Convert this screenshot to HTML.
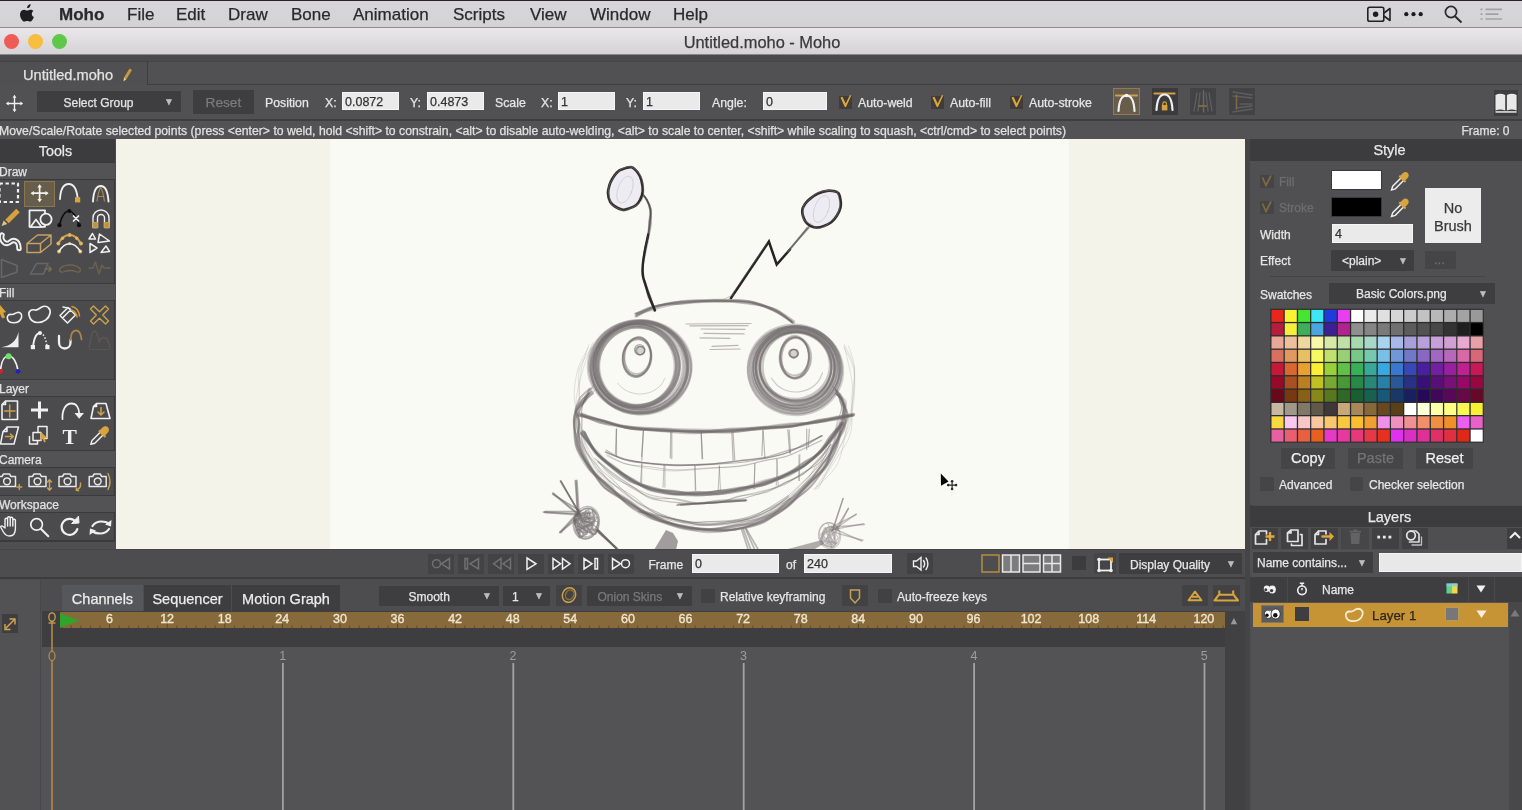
<!DOCTYPE html>
<html lang="en">
<head>
<meta charset="utf-8">
<title>Untitled.moho - Moho</title>
<style>
*{box-sizing:border-box;margin:0;padding:0}
html,body{width:1522px;height:810px;overflow:hidden}
body{position:relative;background:#4c4c4e;font-family:"Liberation Sans",sans-serif;color:#e6e6e6;font-size:12px;-webkit-font-smoothing:antialiased;-webkit-text-stroke:.25px}
.a{position:absolute}
.t{position:absolute;white-space:nowrap;line-height:1}
#menubar{left:0;top:0;width:1522px;height:28px;background:linear-gradient(#d7d5d8,#d3d3d5);border-top:1px solid #24242c;border-bottom:1px solid #8f8d90}
#menubar .t{top:5px;font-size:17px;color:#2a2a2a}
#titlebar{left:0;top:28px;width:1522px;height:27px;background:linear-gradient(#eae7eb,#d6d3d6);border-bottom:1px solid #8a8689}
.tl{position:absolute;width:15px;height:15px;border-radius:50%;top:6px}
#chrome{left:0;top:55px;width:1522px;height:84px;background:#505052}
.inp{position:absolute;background:#eaeaea;border:1px solid #f6f6f6;color:#333;font-size:12.500px;line-height:17px;padding-left:2px;padding-top:1px;height:18px}
.dd{position:absolute;background:#3e3e40;color:#e6e6e6}
.btn{position:absolute;background:#414143}
.cb{position:absolute;width:13px;height:13px;background:#403c38}
.hd{position:absolute;background:#3c3c3e;text-align:center;color:#e8e8e8;font-size:15px}
.sec{position:absolute;left:0;width:115px;height:14px;background:#535355;color:#e2e2e2;font-size:12px;line-height:18.500px;text-indent:-1px;overflow:hidden;border-top:1px solid #3a3a3c;border-bottom:1px solid #3a3a3c}
</style>
</head>
<body>
<svg width="0" height="0" style="position:absolute"><defs><filter id="soft" x="0" y="0" width="1" height="1" color-interpolation-filters="sRGB"><feGaussianBlur stdDeviation="0.6" edgeMode="duplicate"/></filter></defs></svg>
<div id="app" style="position:absolute;left:0;top:0;width:1522px;height:810px;filter:url(#soft)">
<div id="menubar" class="a">
  <svg class="a" style="left:19px;top:3px" width="17" height="20" viewBox="0 0 17 20"><path d="M11.6 0.2c.1 1-.3 2-.9 2.700-.7.8-1.700 1.300-2.600 1.200-.1-1 .4-2 .9-2.600.7-.8 1.800-1.300 2.600-1.300zM14.500 7c-1.100.7-1.700 1.600-1.700 2.900 0 1.500.9 2.600 2.100 3.100-.3.900-.7 1.700-1.200 2.500-.7 1-1.500 2.100-2.700 2.100-1.100 0-1.400-.7-2.800-.7s-1.800.7-2.800.7c-1.200 0-2-1.100-2.800-2.200C1.100 13.200.4 10 1.600 7.900c.8-1.400 2.100-2.200 3.500-2.200 1.200 0 2.100.8 3 .8.900 0 1.700-.8 3.200-.8 1.200 0 2.400.5 3.200 1.300z" fill="#1e1e1e"/></svg>
  <span class="t" style="left:59px;font-weight:bold">Moho</span>
  <span class="t" style="left:127px">File</span>
  <span class="t" style="left:176px">Edit</span>
  <span class="t" style="left:228px">Draw</span>
  <span class="t" style="left:291px">Bone</span>
  <span class="t" style="left:353px">Animation</span>
  <span class="t" style="left:453px">Scripts</span>
  <span class="t" style="left:530px">View</span>
  <span class="t" style="left:590px">Window</span>
  <span class="t" style="left:673px">Help</span>
  <svg class="a" style="left:1360px;top:0" width="160" height="27" viewBox="1360 1 160 27"><g fill="none" stroke="#222" stroke-width="1.600"><rect x="1367.800" y="7.300" width="16" height="14" rx="1.800"/><path d="M1384 13l6-4.500v12l-6-4.500" stroke-linejoin="round"/><circle cx="1451" cy="12" r="5.600" stroke="#2a2a2a" stroke-width="1.700"/><path d="M1455 16.200l6.500 6.300" stroke="#2a2a2a" stroke-width="1.900"/></g><g fill="#1c1c1c"><circle cx="1375.600" cy="14.200" r="2.700"/><circle cx="1406.300" cy="14.200" r="2.100"/><circle cx="1413.500" cy="14.200" r="2.100"/><circle cx="1420.700" cy="14.200" r="2.100"/></g><g stroke="#a2a2a2" stroke-width="1.700"><path d="M1480.500 9.300h2M1485.500 9.300h16.500M1480.500 14.200h2M1485.500 14.200h13M1480.500 19h2M1485.500 19h16.500"/></g></svg>
</div>
<div id="titlebar" class="a">
  <div class="tl" style="left:3.500px;background:#ee5c56"></div>
  <div class="tl" style="left:27.500px;background:#f6bd3e"></div>
  <div class="tl" style="left:51.500px;background:#5fc84a"></div>
  <span class="t" style="left:0;width:1522px;text-align:center;top:6px;padding-left:2px;font-size:16.400px;color:#3a3a3a">Untitled.moho - Moho</span>
</div>
<div id="chrome" class="a">
  <div class="a" style="left:0;top:0;width:1522px;height:6px;background:#4a4a4c"></div>
  <div class="a" style="left:0;top:6px;width:148px;height:24px;background:#505052;border-right:1px solid #3e3e40;border-top:1px solid #424244"></div>
  <div class="a" style="left:148px;top:6px;width:1374px;height:24px;background:#515153;border-bottom:1px solid #3e3e40;border-top:1px solid #464648"></div>
  <span class="t" style="left:23px;top:13px;font-size:14.600px;color:#e2e2e2">Untitled.moho</span>
  <svg class="a" style="left:120px;top:12px" width="14" height="16" viewBox="0 0 14 16"><path d="M9.500 1.500l2.500 1.500-5.500 9-2.500-1.500z" fill="#c99a3c"/><path d="M4 10.500l2.500 1.500-3 2.500z" fill="#e6d2a0"/></svg>
  <div class="a" style="left:0;top:30px;width:1522px;height:36px;background:#515153;border-bottom:2px solid #3e3e40"></div>
  <svg class="a" style="left:4.500px;top:39px" width="19" height="19" viewBox="0 0 22 22"><g stroke="#f0f0f0" stroke-width="1.600" fill="#f0f0f0"><path d="M11 3v16M3 11h16" fill="none"/><path d="M11 1l2.200 3.200h-4.400zM11 21l2.200-3.200h-4.400zM1 11l3.200-2.200v4.400zM21 11l-3.200-2.200v4.400z" stroke="none"/></g></svg>
  <div class="dd" style="left:37px;top:36px;width:144px;height:21px"></div>
  <span class="t" style="left:63.500px;top:42px;font-size:12px;color:#e4e4e4">Select Group</span>
  <span class="t" style="left:164px;top:42px;font-size:10px;color:#bdbdbd">▼</span>
  <div class="btn" style="left:193px;top:35px;width:61px;height:24px;background:#3e3e40"></div>
  <span class="t" style="left:205.500px;top:41px;font-size:13.700px;color:#7b7b7d">Reset</span>
  <span class="t" style="left:265px;top:41.500px;font-size:12.300px">Position</span>
  <span class="t" style="left:325px;top:41.500px;font-size:12.300px">X:</span>
  <div class="inp" style="left:342px;top:37px;width:57px">0.0872</div>
  <span class="t" style="left:410px;top:41.500px;font-size:12.300px">Y:</span>
  <div class="inp" style="left:427px;top:37px;width:57px">0.4873</div>
  <span class="t" style="left:495px;top:41.500px;font-size:12.300px">Scale</span>
  <span class="t" style="left:541px;top:41.500px;font-size:12.300px">X:</span>
  <div class="inp" style="left:558px;top:37px;width:57px">1</div>
  <span class="t" style="left:626px;top:41.500px;font-size:12.300px">Y:</span>
  <div class="inp" style="left:643px;top:37px;width:57px">1</div>
  <span class="t" style="left:712px;top:41.500px;font-size:12.300px">Angle:</span>
  <div class="inp" style="left:763px;top:37px;width:64px">0</div>
  <div class="cb" style="left:839px;top:41px"></div>
  <span class="t" style="left:858px;top:41.500px;font-size:12.300px">Auto-weld</span>
  <div class="cb" style="left:931px;top:41px"></div>
  <span class="t" style="left:950px;top:41.500px;font-size:12.300px">Auto-fill</span>
  <div class="cb" style="left:1010px;top:41px"></div>
  <span class="t" style="left:1029px;top:41.500px;font-size:12.300px">Auto-stroke</span>
  <svg class="a" style="left:837px;top:38px" width="190" height="18" viewBox="0 0 190 18"><g id="ck"><path d="M3.500 4.500l2-.8 3.200 6.800 4.300-8.500 1.300.6-5.300 11.400h-1.200z" fill="#dca640"/></g><use href="#ck" x="92"/><use href="#ck" x="171"/></svg>
  <div class="btn" style="left:1113px;top:33px;width:27px;height:27px;background:#685d4b;border:1px solid #8f7c56"></div>
  <div class="btn" style="left:1152px;top:33px;width:26px;height:27px;background:#3b3b3d"></div>
  <div class="btn" style="left:1190px;top:33px;width:26px;height:27px;background:#434345"></div>
  <div class="btn" style="left:1229px;top:33px;width:26px;height:27px;background:#434345"></div>
  <div class="btn" style="left:1494px;top:34.500px;width:24px;height:26px;background:#3e3e40"></div>
  <svg class="a" style="left:1110px;top:30px" width="412" height="34" viewBox="1110 85 412 34">
    <g fill="none" stroke-linecap="round">
      <path d="M1116 95.500h21" stroke="#c9a050" stroke-width="2.200"/>
      <path d="M1118.500 111c0.500-9 3-15.500 8-15.500s7.500 6.500 8 15.500" stroke="#f0f0f0" stroke-width="2.200"/>
      <circle cx="1126.500" cy="95.500" r="1.800" fill="#f4f4f4" stroke="none"/>
      <path d="M1154.500 93.500h20" stroke="#d2a043" stroke-width="2.200"/>
      <path d="M1156.500 110c0.500-9 3-15.500 8-15.500s7.500 6.500 8 15.500" stroke="#eeeeee" stroke-width="2.200"/>
      <rect x="1161.800" y="105" width="5.600" height="5.400" fill="#d9a23d" stroke="none"/>
      <path d="M1162.800 105v-1.300a1.800 1.800 0 0 1 3.600 0v1.300" stroke="#d9a23d" stroke-width="1.200"/>
      <g stroke="#5e5e60" stroke-width="1.400"><path d="M1197 93l-3 18M1200 93l-2 18M1209 93l3 18M1206 93l2 18"/><path d="M1203.500 91v21" stroke="#6a6a6a"/><path d="M1199 106h7" stroke="#7a6a44" stroke-width="2"/></g>
      <g stroke="#5e5e60" stroke-width="1.400"><path d="M1233 92l19 3M1233 96l19 2M1240 104h12M1233 112l19-3M1236 108l16-2"/><path d="M1236.500 95v14" stroke="#7a6a44" stroke-width="1.600"/></g>
    </g>
    <g fill="#e9e9e9"><path d="M1495.500 95c3-1.800 6.500-1.800 9.700 0v15.500c-3.200-1.500-6.700-1.500-9.700 0z"/><path d="M1516.600 95c-3-1.800-6.500-1.800-9.700 0v15.500c3.200-1.500 6.700-1.500 9.700 0z"/><rect x="1495.500" y="111.200" width="21.100" height="1.500"/></g>
  </svg>
  <div class="a" style="left:0;top:66px;width:1522px;height:18px;background:#535355"></div>
  <span class="t" style="left:-1px;top:69.500px;font-size:12.220px;color:#e0e0e0">Move/Scale/Rotate selected points (press &lt;enter&gt; to weld, hold &lt;shift&gt; to constrain, &lt;alt&gt; to disable auto-welding, &lt;alt&gt; to scale to center, &lt;shift&gt; while scaling to squash, &lt;ctrl/cmd&gt; to select points)</span>
  <span class="t" style="left:1461.500px;top:69.500px;font-size:12px;color:#e0e0e0">Frame: 0</span>
</div>
<div id="tools" class="a" style="left:0;top:139px;width:115px;height:410px;background:#4b4b4d;border-right:1px solid #39393b">
  <div class="hd" style="left:0;top:0;width:115px;height:23px;line-height:24px;font-size:14.300px;padding-right:4px">Tools</div>
  <div class="sec" style="top:23px;height:18px">Draw</div>
  <div class="sec" style="top:144px;height:18px">Fill</div>
  <div class="sec" style="top:240px;height:18px">Layer</div>
  <div class="sec" style="top:311px;height:18px">Camera</div>
  <div class="sec" style="top:356px;height:18px">Workspace</div>
  <div class="a" style="left:0;top:401px;width:115px;height:2px;background:#3a3a3c"></div>
  <div class="a" style="left:0;top:403px;width:115px;height:7px;background:#4f4f51"></div>
  <div class="a" style="left:24px;top:42px;width:31px;height:26px;background:#675d4b;border:1px solid #8a7751"></div>
  <svg class="a" style="left:0;top:0" width="115" height="410" viewBox="0 139 115 410">
  <g fill="none" stroke="#f0f0f0" stroke-width="2" stroke-linecap="round" stroke-linejoin="round">
    <!-- Draw row 1 -->
    <rect x="-0.500" y="183.500" width="18.500" height="18.500" stroke-width="2.200" stroke-dasharray="3.400 2.600" stroke-linecap="butt"/>
    <path d="M39.600 186v14.500M32.300 193.200h14.600" stroke-width="1.700"/>
    <path d="M39.600 184.200l2.300 3.200h-4.600zM39.600 202.200l2.300-3.200h-4.600zM30.600 193.200l3.200-2.300v4.600zM48.600 193.200l-3.200-2.300v4.600z" fill="#f0f0f0" stroke="none"/>
    <path d="M60 199c.5-9 3.500-15 8.700-15s8.200 6 9 15" stroke-width="1.800"/>
    <rect x="75" y="197.200" width="5.200" height="5.200" fill="#d8a440" stroke="none"/>
    <path d="M93 201.500c.5-9.500 3-15.500 7.700-15.500s7.200 6 7.800 15.500" stroke-width="1.900"/>
    <path d="M97 201c1-7 2-11 3.700-13.500 1.700 2.500 2.700 6.500 3.700 13.500M98.500 196.500h4.500" stroke="#a48c52" stroke-width="1.200"/>
    <!-- Draw row 2 -->
    <path d="M7 221.500l11-11" stroke="#d8a33c" stroke-width="5" stroke-linecap="butt"/>
    <path d="M1.500 226l2.200-5.600 3.600 3.600z" fill="#dcc88c" stroke="none"/>
    <rect x="29.500" y="210.300" width="15.500" height="16.500" stroke-width="1.800"/>
    <circle cx="46" cy="219.300" r="5.600" fill="#4b4b4d" stroke-width="1.800"/>
    <path d="M30.500 227l5.500-7.500 5.500 7.500z" fill="#4b4b4d" stroke-width="1.700"/>
    <path d="M59.500 225c2-8 5-14 9.500-14s7.500 6 10 14" stroke="#0c0c0c" stroke-width="1.500"/>
    <circle cx="59.500" cy="225.200" r="2.100" fill="#0c0c0c" stroke="none"/><circle cx="79" cy="225.200" r="2.100" fill="#0c0c0c" stroke="none"/><circle cx="69.300" cy="211" r="2" fill="#0c0c0c" stroke="none"/>
    <path d="M73.500 216l5 5M78.500 216l-5 5" stroke-width="1.700"/>
    <path d="M93 227.500v-9.500a8 8 0 0 1 16 0v9.500h-4.500v-9.500a3.500 3.500 0 0 0 -7 0v9.500z" stroke-width="1.400"/>
    <path d="M93 222.500h4.500v5h-4.500zM104.500 222.500h4.500v5h-4.500z" fill="#b8924a" stroke="#c9a045" stroke-width="1.200"/>
    <!-- Draw row 3 -->
    <path d="M2 235c-1.500 4 1.500 8.500 5 8.500 3 0 3.500-3 6.500-3 3.500 0 5.500 3.500 5.500 8" stroke-width="5.500"/>
    <path d="M2 235c-1.500 4 1.500 8.500 5 8.500 3 0 3.500-3 6.500-3 3.500 0 5.500 3.500 5.500 8" stroke="#4b4b4d" stroke-width="1.600"/>
    <path d="M27 243.500l10.500-8.500h13.500l-10.500 8.500zM27 243.500v9h13.500v-9M40.500 252.500l10.500-8.500v-9" stroke="#c5a162" stroke-width="1.500"/>
    <path d="M58.300 243.500c3-5.500 7-8.500 11.300-8.500s8.300 3 11.300 8.500" stroke="#d2a344" stroke-width="2"/>
    <g fill="#e0b65c" stroke="none"><circle cx="58.300" cy="243.500" r="1.900"/><circle cx="62.500" cy="238.300" r="1.700"/><circle cx="69.600" cy="235" r="1.900"/><circle cx="76.700" cy="238.300" r="1.700"/><circle cx="81" cy="243.500" r="1.900"/><circle cx="59" cy="251.500" r="1.900"/><circle cx="80.300" cy="251.500" r="1.900"/><circle cx="69.600" cy="243.600" r="1.700"/></g>
    <path d="M59 251.500c3-5 6.500-7.800 10.600-7.800s7.700 2.800 10.700 7.800" stroke-width="1.600"/>
    <path d="M89 239l3.500-5.500 3 5.500zM98 242.500l1.500-8.500 10 7zM90 243.500l7 4.500-7 4.500zM101 252.500l5-6.500 3.500 5.500z" stroke-width="1.500"/>
    <!-- Draw row 4 (disabled) -->
    <g stroke="#68686a" stroke-width="1.500">
      <path d="M1.500 259.500l15.500 6v6.500l-15.500 5.500z"/>
      <path d="M36.500 263.500h11.500l-4.500 10.500h-13z"/>
      <path d="M45 269h6M49 266.800l2.500 2.200-2.500 2.200" stroke="#7a6c4c"/>
      <path d="M59.500 270c0-2.500 4.500-5 10.500-5s10.500 2.500 10.500 5-3 2.500-5 1.500-3.500-1-5.500-1-3.500 0-5.500 1-5 1-5-1.500z" stroke="#72664c" stroke-width="1.300"/>
      <path d="M89 268h4l2.500-6 3.500 12 3-9 2 3h6" stroke="#6c6450" stroke-width="1.300"/>
    </g>
    <!-- Fill row 1 -->
    <path d="M0 305.500l5.500 6.500-2.800.3 1.800 5-2 .8-2.500-5z" fill="#dca43a" stroke="#dca43a" stroke-width=".800"/>
    <path d="M7.500 319c-1-3 1-5 4-4.500 2.500.3 3.500-1.500 6-2 3-.6 5 2 4 5-.9 3-4 5.300-8 5.300-3 0-5.300-1.300-6-3.800z" stroke-width="1.600"/>
    <path d="M29 315c-1-3.500 2-6 6-5 3 .7 4.500-2.500 8-3.500 4.500-1.200 8 2.300 7 7-1 5-6 9-12 9-4.500 0-8-2.500-9-7.500z" stroke-width="1.700"/>
    <path d="M60 315.500l8-8 7.500 7.500-8 8zM62.500 318l8-8M63 307l7 1.500" stroke-width="1.500"/>
    <path d="M72 306.500c4 1 7 4 7.500 9.500M71.500 310c3 1 5 3 5.500 7" stroke="#c9963a" stroke-width="1.600"/>
    <path d="M93.500 306l6 5.800 6-5.800 3 3-5.800 6 5.800 6-3 3-6-5.800-6 5.800-3-3 5.800-6-5.800-6z" stroke="#c9a050" stroke-width="1.400"/>
    <!-- Fill row 2 -->
    <path d="M1.200 347.300h17.300v-15.500c-2 9-7 14-17.300 15.500z" fill="#efefef" stroke="none"/>
    <path d="M33 346.500c1-8 3.500-13.500 7-13.500" stroke-width="1.800"/>
    <path d="M40 333c3.500 0 6 5.500 7 13.500" stroke-width="1.500" stroke-dasharray="1.600 1.800" stroke-linecap="butt"/>
    <g fill="#f0f0f0" stroke="none"><rect x="30.800" y="345" width="4.200" height="4.200"/><rect x="45.300" y="345" width="4.200" height="4.200"/><circle cx="40" cy="333" r="2"/></g>
    <path d="M59 336v6.500c0 3.500 2.500 6 5.800 6s5.700-2.500 5.700-6v-2.500" stroke-width="2.300"/>
    <path d="M70.500 340c.3-6 2.500-9.500 5.500-9.500s5 3.500 5.500 9" stroke="#a88446" stroke-width="1.800"/>
    <path d="M89 348c1.500-10 3.500-17 5.500-17s3.500 5 5 11c1-3 2.500-4.500 4.500-4.500 3 0 5 4 6 10.500" stroke="#5d5950" stroke-width="1.300"/>
    <path d="M89.500 349.500h21" stroke="#5d5950" stroke-width="1.200" stroke-dasharray="1.500 1.500"/>
    <!-- Fill row 3 -->
    <path d="M.5 370.500c.8-9 3.800-14.500 8.200-14.500s7.500 5.500 9.300 14.500" stroke-width="1.700"/>
    <circle cx="8.600" cy="356.300" r="3" fill="#6fe06c" stroke="none"/><circle cx=".500" cy="371.300" r="2.400" fill="#d8202a" stroke="none"/><circle cx="18" cy="371.300" r="2.400" fill="#2222b8" stroke="none"/>
    <!-- Layer row 1 -->
    <path d="M5.500 401h12v18.500h-15.500v-15zM2 404.500h3.500v-3.500" stroke-width="1.600"/>
    <path d="M9.700 405v12M4.500 411h10.500" stroke="#c9a050" stroke-width="1.500"/>
    <path d="M39.500 401.500v17M31 410h17" stroke-width="3" stroke-linecap="butt"/>
    <path d="M62.500 419c-.5-9 3-15.500 9-15.500 5 0 7.500 4.500 7.700 10" stroke-width="1.800"/>
    <path d="M74.500 413h9.500l-4.800 5.800z" fill="#f0f0f0" stroke="none"/>
    <path d="M96.500 403.500h9.500l4 15h-19l2.500-12zM93.500 406.500h3v-3" stroke-width="1.600"/>
    <path d="M101 407.500v6.500M98 412l3 3 3-3" stroke="#c9a050" stroke-width="1.600"/>
    <!-- Layer row 2 -->
    <path d="M7.500 427h11l-4.500 17h-13.500l2.500-12.500zM3 431.500h4v-4.500" stroke-width="1.500"/>
    <path d="M5.500 436.500h7.500M10.500 434l2.800 2.500-2.800 2.500" stroke="#c9a050" stroke-width="1.600"/>
    <path d="M38 432v-5.500h9v12h-3M33 432.500h8v8h-8zM29.500 436.500v7.500h8v-3" stroke-width="1.500"/>
    <path d="M40.500 431.500l6.800 6.500-3 .3 1.500 3.500-1.600.7-1.500-3.600-2.200 2z" fill="#d8a440" stroke="none"/>
    <path d="M90.800 444.300l1.200-3.800 9-9 2.800 2.800-9 9z" stroke-width="1.400"/>
    <path d="M100 430l2.500-2.500c1.500-1.500 4-1.800 5.500-.3s1.200 4-.3 5.500l-2.500 2.500 1 1-1.500 1.500-6.500-6.500 1.500-1.500z" fill="#d8a440" stroke="none"/>
    <!-- Camera row -->
    <g stroke-width="1.500" stroke="#e6e6e6">
      <path d="M-1.500 476.500h3.500l1.500-2.500h6l1.500 2.500h4.500v10h-17z"/><circle cx="7" cy="481.300" r="3.400"/>
      <path d="M29 476.500h3.500l1.500-2.500h6l1.500 2.500h4.500v10h-17z"/><circle cx="37.500" cy="481.300" r="3.400"/>
      <path d="M59 476.500h3.500l1.500-2.500h6l1.500 2.500h4.500v10h-17z"/><circle cx="67.500" cy="481.300" r="3.400"/>
      <path d="M89.200 476.500h3.500l1.500-2.500h6l1.500 2.500h4.500v10h-17z"/><circle cx="97.700" cy="481.300" r="3.400"/>
    </g>
    <g stroke="#c9a050" stroke-width="1.400">
      <path d="M19.300 484.500v5M16.800 487h5"/>
      <path d="M49.500 480v10M47.500 482l2-2.200 2 2.200M47.500 488l2 2.200 2-2.200"/>
      <path d="M80.500 483c.5 3.500-1 6-4 7M76.500 488l-.3 2.300 2.300.4"/>
      <path d="M108 473.500c2.500 5 2.500 11 0 16"/>
    </g>
    <!-- Workspace row -->
    <path d="M5 528v-8.500a1.300 1.300 0 0 1 2.600 0v6.500-8a1.300 1.300 0 0 1 2.600 0v8-7.500a1.300 1.300 0 0 1 2.600 0v7.500-5.500a1.300 1.300 0 0 1 2.600 0v8c0 5-2 7.500-6 7.500-3 0-4.500-1.500-6-4l-2.500-4.500c-.6-1.200.8-2.200 1.800-1.200z" stroke-width="1.400"/>
    <circle cx="36.600" cy="524.400" r="5.800" stroke-width="1.700"/><path d="M40.800 528.800l7.500 7.500" stroke-width="2"/>
    <path d="M76 522a8 8 0 1 0 1.300 7" stroke-width="2.200"/>
    <path d="M72 523.500l7-.5-.5-6.500z" fill="#f0f0f0" stroke="#f0f0f0" stroke-width="1"/>
    <path d="M92.500 526c2-3 5-4.500 9-4.500 3 0 5.500.7 7.500 2M109 529c-2 3-5 4.500-9 4.500-3 0-5.500-.7-7.500-2" stroke-width="2.200"/>
    <path d="M111.500 520l-.5 6.500-6-2zM89.500 535l.5-6.500 6 2z" fill="#f0f0f0" stroke="none"/>
  </g>
  <text x="69.600" y="443.700" font-family="Liberation Serif, serif" font-weight="bold" font-size="21.500" fill="#f0f0f0" text-anchor="middle">T</text>
  </svg>
</div>
<div id="canvas" class="a" style="left:116px;top:139px;width:1129px;height:410px;background:#f3f3ea;overflow:hidden">
  <div class="a" style="left:214px;top:0;width:739px;height:410px;background:#fafaf4"></div>
  <svg class="a" style="left:0;top:0" width="1129" height="410" viewBox="116 139 1129 410"><defs><filter id="bl" x="-5%" y="-5%" width="110%" height="110%"><feGaussianBlur stdDeviation=".55"/></filter></defs><g fill="none" stroke-linecap="round" stroke-linejoin="round" filter="url(#bl)">
<path d="M635.4 313.8C638.8 312.5 648.1 308.0 655.5 306.0C663.0 304.1 670.3 303.3 680.1 302.3C690.0 301.4 703.1 300.5 714.5 300.5C725.9 300.5 738.6 300.9 748.4 302.3C758.3 303.6 766.2 305.1 773.5 308.6C780.9 312.1 789.5 320.7 792.7 323.1" stroke="#6f696b" stroke-width="1.6" opacity="0.32"/>
<path d="M636.4 316.5C639.6 315.0 647.7 309.7 655.3 307.1C662.8 304.6 671.3 302.5 681.6 301.3C691.9 300.0 706.0 299.8 717.2 299.8C728.4 299.8 739.3 299.3 748.8 301.2C758.3 303.1 767.2 307.6 774.3 311.1C781.5 314.6 789.0 320.4 791.9 322.3" stroke="#6f696b" stroke-width="2.0" opacity="0.33"/>
<path d="M636.2 313.5C639.1 312.3 646.1 308.3 653.5 306.5C660.9 304.7 670.3 303.5 680.6 302.6C690.9 301.6 703.8 300.9 715.4 300.8C726.9 300.7 739.7 300.2 749.8 301.8C759.9 303.5 769.0 307.3 776.0 310.7C783.0 314.1 789.4 320.3 792.1 322.3" stroke="#6f696b" stroke-width="1.9" opacity="0.40"/>
<path d="M636.8 314.3C640.1 312.9 649.5 308.0 656.6 306.2C663.8 304.4 670.0 304.6 679.7 303.7C689.4 302.7 703.4 300.6 714.8 300.5C726.3 300.4 738.3 301.4 748.4 303.1C758.6 304.7 768.3 307.2 775.9 310.2C783.5 313.3 791.2 319.5 794.3 321.4" stroke="#6f696b" stroke-width="2.0" opacity="0.36"/>
<path d="M636.3 314.9C639.6 313.9 648.9 310.9 656.2 309.0C663.4 307.1 670.2 304.7 679.9 303.4C689.6 302.1 702.7 301.0 714.5 301.2C726.3 301.3 740.2 302.8 750.5 304.2C760.8 305.5 769.1 306.2 776.1 309.3C783.1 312.3 789.9 320.4 792.6 322.6" stroke="#6f696b" stroke-width="1.5" opacity="0.35"/>
<path d="M634.9 313.7C638.0 312.8 646.2 310.4 653.5 308.4C660.8 306.5 668.4 303.1 678.7 301.9C689.1 300.8 704.0 301.7 715.6 301.8C727.3 301.8 738.7 300.7 748.6 302.3C758.5 303.9 767.6 307.8 775.2 311.3C782.8 314.8 790.9 321.2 794.1 323.2" stroke="#6f696b" stroke-width="1.7" opacity="0.34"/>
<path d="M635.5 316.3C639.0 314.6 649.3 308.7 656.6 306.3C663.8 303.9 669.1 302.9 678.9 301.9C688.7 300.9 703.2 300.5 715.1 300.4C727.0 300.4 740.6 300.1 750.3 301.7C760.0 303.2 766.3 306.3 773.3 309.7C780.4 313.1 789.3 320.1 792.6 322.2" stroke="#6f696b" stroke-width="2.2" opacity="0.38"/>
<path d="M636.1 315.4C639.3 313.8 648.0 307.9 655.6 306.0C663.2 304.0 671.1 304.5 681.4 303.8C691.6 303.0 705.9 301.8 717.3 301.5C728.7 301.2 740.2 300.7 749.6 302.2C759.0 303.6 766.7 307.4 773.7 310.5C780.6 313.5 788.5 318.9 791.5 320.5" stroke="#6f696b" stroke-width="1.7" opacity="0.31"/>
<path d="M590.1 388.5C588.5 390.1 582.6 394.6 580.2 398.0C577.8 401.5 576.8 404.9 575.8 409.2C574.7 413.6 573.3 418.3 573.8 424.1C574.4 429.9 576.7 436.9 579.1 444.0C581.6 451.2 584.1 460.5 588.6 467.1C593.1 473.8 599.3 477.5 606.2 483.9C613.1 490.3 622.4 500.3 630.0 505.8C637.5 511.3 643.9 513.7 651.8 516.9C659.8 520.1 668.5 522.7 677.7 524.8C686.9 526.8 697.1 529.1 707.1 529.2C717.1 529.2 729.0 526.3 737.8 525.1C746.7 523.9 752.1 525.7 760.3 522.0C768.5 518.3 779.2 509.5 787.2 503.0C795.1 496.6 802.1 489.1 808.2 483.4C814.4 477.6 819.4 474.7 824.2 468.7C829.0 462.6 834.3 454.0 837.0 447.1C839.8 440.2 839.6 432.7 840.7 427.3C841.8 421.8 843.2 418.5 843.6 414.5C844.1 410.6 844.3 407.6 843.2 403.6C842.1 399.6 838.1 392.6 837.0 390.4" stroke="#6f696b" stroke-width="2.0" opacity="0.41"/>
<path d="M593.0 392.7C591.6 394.2 587.5 398.4 584.8 401.3C582.0 404.2 578.0 407.1 576.5 410.1C575.0 413.1 575.8 413.6 575.7 419.4C575.6 425.1 573.7 436.5 575.9 444.8C578.0 453.1 583.0 462.3 588.7 469.1C594.3 475.9 602.6 479.6 609.6 485.7C616.5 491.8 622.9 500.6 630.4 505.7C637.9 510.8 646.6 513.0 654.5 516.2C662.5 519.5 669.8 523.4 678.4 525.5C687.1 527.6 696.6 528.2 706.3 528.8C716.0 529.5 726.9 530.8 736.7 529.2C746.5 527.7 756.4 523.1 764.9 519.4C773.4 515.6 781.1 512.1 787.9 506.7C794.7 501.3 799.3 493.4 805.7 486.9C812.1 480.4 821.2 474.4 826.3 467.6C831.4 460.7 834.1 452.2 836.4 445.9C838.7 439.6 838.8 434.8 840.2 429.6C841.6 424.4 843.7 419.4 844.6 414.7C845.5 410.0 846.8 404.8 845.6 401.4C844.5 398.1 838.8 395.7 837.4 394.5" stroke="#6f696b" stroke-width="2.0" opacity="0.31"/>
<path d="M588.9 389.0C588.3 391.2 587.4 397.9 585.3 401.7C583.1 405.5 577.0 408.3 576.0 411.8C575.0 415.4 578.9 417.1 579.2 422.9C579.5 428.6 576.2 439.2 577.7 446.3C579.1 453.3 582.6 458.5 587.9 465.3C593.3 472.0 602.9 480.1 609.6 486.8C616.3 493.5 621.2 500.1 628.1 505.4C635.1 510.8 642.7 515.8 651.6 519.1C660.6 522.4 672.7 523.7 681.8 525.4C691.0 527.1 697.8 529.0 706.6 529.3C715.4 529.7 725.4 529.2 734.5 527.5C743.7 525.8 753.3 522.4 761.7 519.0C770.1 515.7 777.3 512.8 784.9 507.3C792.5 501.7 800.6 492.3 807.2 485.8C813.8 479.3 819.9 474.5 824.5 468.3C829.0 462.0 831.6 455.0 834.6 448.3C837.5 441.7 840.2 434.5 842.0 428.2C843.9 421.8 845.5 415.0 845.6 410.3C845.7 405.6 844.4 403.0 842.7 400.2C840.9 397.5 836.5 394.8 835.2 393.7" stroke="#6f696b" stroke-width="1.6" opacity="0.35"/>
<path d="M592.3 391.3C590.6 392.8 584.4 396.7 582.0 400.1C579.7 403.5 579.6 407.9 578.3 411.6C577.0 415.3 574.5 416.8 574.3 422.3C574.1 427.9 574.2 437.1 577.1 444.8C580.0 452.4 586.5 460.9 591.5 468.0C596.6 475.2 600.9 481.7 607.3 487.5C613.8 493.2 622.8 497.8 630.3 502.7C637.9 507.6 644.3 512.8 652.6 517.0C660.9 521.3 670.9 525.8 680.1 528.1C689.3 530.4 698.4 530.5 707.7 530.7C717.0 530.9 726.5 531.0 735.9 529.5C745.3 528.0 755.2 525.9 764.1 521.6C773.0 517.3 782.1 509.2 789.5 503.7C796.8 498.1 802.3 495.1 808.3 488.5C814.4 481.9 821.8 471.1 825.9 464.0C830.0 456.8 830.6 451.9 832.9 445.7C835.2 439.4 837.9 431.8 839.6 426.5C841.3 421.3 842.3 417.7 843.1 413.9C843.9 410.2 845.8 407.7 844.6 404.2C843.4 400.8 837.5 395.0 836.1 393.2" stroke="#6f696b" stroke-width="1.9" opacity="0.31"/>
<path d="M593.1 393.6C591.2 395.1 584.0 399.8 581.4 402.5C578.8 405.3 577.8 406.4 577.4 409.9C577.1 413.5 579.4 417.9 579.2 423.9C579.1 429.8 574.8 438.4 576.6 445.6C578.4 452.8 585.3 460.5 590.1 467.1C594.9 473.7 598.8 479.4 605.3 485.0C611.8 490.5 621.4 495.0 629.2 500.3C637.1 505.6 644.3 512.4 652.3 516.7C660.3 521.0 667.9 523.7 677.3 526.1C686.7 528.4 699.3 530.0 708.7 530.6C718.1 531.2 724.2 531.1 733.6 529.7C742.9 528.3 756.1 526.5 764.6 522.1C773.2 517.8 778.0 509.5 784.8 503.7C791.6 497.9 799.1 494.2 805.4 487.6C811.7 480.9 817.9 470.5 822.7 463.9C827.6 457.4 831.1 454.5 834.6 448.3C838.1 442.1 842.3 432.1 843.8 426.6C845.3 421.2 843.6 419.3 843.5 415.3C843.5 411.4 844.7 407.4 843.4 403.1C842.1 398.8 837.0 391.8 835.7 389.5" stroke="#6f696b" stroke-width="1.9" opacity="0.34"/>
<path d="M588.6 393.5C587.8 394.8 585.9 398.6 583.8 401.7C581.6 404.8 577.3 408.3 575.7 412.0C574.1 415.7 573.6 418.5 574.1 424.0C574.5 429.5 575.5 437.4 578.2 445.1C580.9 452.8 585.7 463.9 590.3 470.4C594.9 476.9 599.4 478.7 605.7 483.9C612.0 489.1 620.8 496.3 628.2 501.5C635.5 506.7 641.6 511.1 649.8 515.1C658.0 519.1 668.0 522.9 677.5 525.3C687.0 527.7 697.0 529.3 706.9 529.4C716.9 529.5 728.1 527.8 737.5 525.8C746.8 523.9 754.9 521.6 763.0 517.7C771.1 513.8 778.9 508.0 786.1 502.3C793.4 496.6 800.1 489.3 806.6 483.3C813.1 477.3 820.9 472.5 825.3 466.3C829.7 460.0 830.1 452.6 833.3 445.9C836.4 439.1 842.1 431.3 844.4 425.8C846.8 420.3 847.5 416.3 847.3 412.6C847.0 409.0 844.6 407.3 843.0 403.9C841.3 400.4 838.3 394.0 837.4 392.0" stroke="#6f696b" stroke-width="1.9" opacity="0.41"/>
<path d="M590.1 392.9C589.1 394.2 586.3 398.0 584.2 400.8C582.0 403.5 579.2 406.0 577.5 409.1C575.8 412.3 574.2 413.6 574.0 419.9C573.8 426.3 573.7 439.7 576.1 447.3C578.5 455.0 583.9 459.4 588.6 466.1C593.4 472.9 597.8 481.6 604.7 487.9C611.6 494.2 622.4 499.3 630.1 504.0C637.8 508.6 642.7 511.8 650.8 515.6C658.9 519.4 669.6 524.3 678.8 526.8C688.1 529.2 696.8 529.7 706.1 530.2C715.4 530.7 724.7 531.3 734.7 529.6C744.6 527.8 757.2 523.4 765.6 519.8C774.1 516.1 778.7 513.4 785.6 507.6C792.5 501.8 801.0 492.2 806.9 485.2C812.9 478.2 816.6 471.9 821.2 465.3C825.9 458.8 831.7 452.2 834.9 446.0C838.0 439.8 839.0 433.7 840.3 428.0C841.6 422.3 842.7 416.1 842.7 411.7C842.8 407.2 841.9 405.2 840.7 401.4C839.5 397.7 836.3 391.3 835.4 389.3" stroke="#6f696b" stroke-width="1.7" opacity="0.32"/>
<path d="M591.5 391.2C590.3 392.8 586.4 397.4 584.4 400.9C582.4 404.4 580.6 408.8 579.2 412.1C577.8 415.5 575.5 415.7 575.9 421.0C576.2 426.3 578.7 436.1 581.2 444.0C583.8 452.0 587.4 461.5 591.3 468.8C595.1 476.1 598.0 482.1 604.4 487.9C610.9 493.7 622.1 498.6 630.2 503.7C638.3 508.9 645.3 514.8 653.3 518.7C661.3 522.7 668.9 524.9 678.0 527.1C687.1 529.4 698.1 532.1 708.0 532.4C718.0 532.7 728.5 530.6 737.7 528.8C746.9 527.0 755.1 525.5 763.5 521.7C771.9 517.9 780.9 512.5 788.0 506.1C795.2 499.7 800.8 490.2 806.5 483.4C812.1 476.6 817.6 471.1 821.9 465.2C826.3 459.3 829.4 454.0 832.8 447.9C836.2 441.8 840.1 434.4 842.3 428.7C844.6 423.1 846.1 418.9 846.2 414.0C846.3 409.1 844.0 402.7 842.9 399.2C841.9 395.8 840.2 394.4 839.7 393.4" stroke="#6f696b" stroke-width="1.8" opacity="0.36"/>
<path d="M591.9 388.6C590.6 390.2 587.0 395.3 584.3 398.6C581.6 402.0 576.7 405.1 575.6 408.7C574.5 412.3 577.1 413.7 577.8 420.3C578.5 427.0 577.8 440.8 579.8 448.7C581.9 456.5 585.5 460.9 590.0 467.3C594.5 473.7 600.3 481.0 606.9 487.0C613.5 493.1 621.8 499.1 629.5 503.7C637.1 508.3 644.7 511.0 652.8 514.6C660.9 518.3 668.6 523.2 678.0 525.6C687.5 528.1 699.6 529.6 709.4 529.4C719.1 529.2 727.8 526.1 736.4 524.3C744.9 522.4 751.9 521.2 760.5 518.2C769.1 515.2 779.9 511.6 788.0 506.1C796.0 500.5 803.0 491.5 809.0 484.8C815.0 478.1 819.8 472.6 824.1 465.8C828.4 459.0 831.5 450.4 834.8 443.9C838.2 437.3 842.0 431.1 844.2 426.3C846.4 421.6 848.8 419.5 848.2 415.4C847.5 411.4 841.7 405.2 840.3 401.8C838.9 398.3 839.9 395.8 839.8 394.6" stroke="#6f696b" stroke-width="1.8" opacity="0.32"/>
<path d="M589.4 393.5C588.0 394.7 583.6 397.7 581.4 400.5C579.1 403.2 576.4 406.9 576.0 410.1C575.6 413.4 578.3 414.0 579.0 419.9C579.8 425.9 578.1 437.8 580.3 446.0C582.5 454.2 588.0 462.1 592.2 469.1C596.4 476.2 599.5 483.0 605.5 488.2C611.5 493.4 620.6 495.6 627.9 500.3C635.2 505.1 640.6 512.7 649.2 517.0C657.9 521.2 670.3 523.8 679.7 525.9C689.2 528.0 696.8 529.1 706.0 529.6C715.2 530.1 725.9 530.4 735.0 528.9C744.0 527.5 751.2 525.2 760.2 520.9C769.2 516.6 780.5 508.5 788.9 502.9C797.3 497.3 804.2 493.5 810.4 487.2C816.6 480.9 822.3 471.8 826.2 464.8C830.2 457.9 831.2 451.5 834.3 445.4C837.4 439.3 843.1 434.0 844.8 428.5C846.5 423.0 845.2 417.4 844.7 412.6C844.2 407.8 843.2 402.6 841.7 399.5C840.2 396.3 836.8 394.8 835.8 393.9" stroke="#6f696b" stroke-width="1.6" opacity="0.41"/>
<path d="M593.7 385.8C592.6 387.3 589.1 390.7 587.1 394.4C585.0 398.2 582.1 404.1 581.4 408.3C580.6 412.5 582.1 413.6 582.4 419.6C582.7 425.5 580.9 436.6 583.2 444.1C585.5 451.5 591.4 458.3 596.2 464.2C601.0 470.2 605.9 474.0 612.1 479.7C618.3 485.5 625.6 493.1 633.2 498.8C640.7 504.4 649.0 510.1 657.3 513.7C665.6 517.4 674.8 518.9 682.9 520.7C691.1 522.6 698.0 524.4 706.1 524.6C714.3 524.9 723.2 523.5 731.9 522.2C740.5 520.9 749.1 520.4 758.0 516.7C766.9 513.0 777.6 505.7 785.4 499.8C793.2 493.9 799.0 487.4 804.8 481.0C810.6 474.6 816.2 468.3 820.3 461.5C824.4 454.7 826.6 446.2 829.3 440.3C832.0 434.4 834.5 431.5 836.5 426.0C838.6 420.6 840.7 411.9 841.5 407.6C842.2 403.3 842.3 404.0 841.0 400.5C839.7 396.9 835.0 388.6 833.7 386.2" stroke="#5c5657" stroke-width="0.9" opacity="0.25"/>
<path d="M594.2 385.0C592.8 386.6 587.7 391.0 585.7 394.8C583.7 398.6 583.0 404.1 582.3 407.9C581.7 411.7 581.8 411.9 581.7 417.6C581.7 423.3 580.1 434.5 582.1 442.1C584.0 449.7 588.9 456.7 593.4 463.2C597.8 469.7 602.0 475.2 608.8 480.9C615.6 486.5 626.5 491.7 634.3 497.1C642.2 502.6 647.4 509.6 656.0 513.6C664.6 517.7 678.0 519.6 685.8 521.6C693.6 523.5 695.2 525.1 702.9 525.2C710.5 525.4 721.8 524.1 731.5 522.7C741.2 521.4 752.4 521.3 761.3 517.2C770.2 513.2 778.1 504.3 784.9 498.6C791.6 492.9 795.5 489.2 801.7 483.0C807.8 476.9 817.0 469.1 822.0 461.9C826.9 454.6 828.9 445.5 831.4 439.5C834.0 433.5 835.5 430.9 837.5 426.1C839.4 421.3 842.5 415.7 843.1 410.8C843.8 405.9 843.2 400.8 841.4 396.7C839.5 392.7 833.6 388.0 832.0 386.3" stroke="#5c5657" stroke-width="1.0" opacity="0.31"/>
<path d="M597.2 388.1C595.6 389.6 590.3 394.3 587.7 397.3C585.2 400.3 583.4 402.6 581.8 406.3C580.2 409.9 578.3 413.1 578.2 419.4C578.1 425.7 578.4 436.8 581.2 444.1C583.9 451.4 590.1 456.9 594.7 463.0C599.4 469.1 602.8 474.6 609.1 480.8C615.5 486.9 625.2 495.0 632.7 500.0C640.2 505.0 645.5 506.9 654.1 510.9C662.6 514.8 675.9 521.0 684.1 523.4C692.4 525.8 695.4 525.6 703.4 525.1C711.5 524.6 723.4 522.2 732.5 520.6C741.6 518.9 749.2 518.4 758.0 515.3C766.8 512.2 777.3 507.3 785.3 501.7C793.3 496.2 800.4 488.7 805.9 481.9C811.5 475.0 814.1 467.2 818.7 460.7C823.2 454.3 830.2 449.5 833.3 443.0C836.4 436.5 835.7 427.1 837.0 421.6C838.4 416.1 841.2 414.0 841.5 409.9C841.8 405.7 839.7 400.1 838.6 396.8C837.5 393.5 835.5 391.2 834.8 390.1" stroke="#5c5657" stroke-width="0.9" opacity="0.24"/>
<path d="M589.0 344.5C587.7 348.8 582.8 360.7 581.1 370.2C579.4 379.7 579.0 391.8 578.8 401.4C578.6 411.1 577.4 418.3 580.0 428.2C582.7 438.1 589.2 450.8 594.8 460.9C600.5 470.9 610.7 483.8 613.9 488.4" stroke="#8a8486" stroke-width="1.0" opacity="0.22"/>
<path d="M844.3 346.6C845.4 351.3 849.3 366.1 850.8 374.7C852.2 383.3 853.7 389.0 853.0 398.1C852.2 407.3 849.0 418.4 846.3 429.5C843.7 440.6 842.4 454.7 837.0 464.7C831.6 474.7 817.7 485.2 813.9 489.4" stroke="#8a8486" stroke-width="1.0" opacity="0.22"/>
<path d="M588.3 347.8C586.5 351.4 580.2 360.7 577.9 369.3C575.5 377.9 573.6 388.9 574.4 399.4C575.1 409.9 579.2 421.4 582.4 432.3C585.6 443.2 588.0 455.5 593.4 465.0C598.8 474.4 611.1 485.0 614.6 489.0" stroke="#8a8486" stroke-width="1.0" opacity="0.22"/>
<path d="M844.1 347.6C845.7 351.2 851.8 360.6 853.5 369.2C855.1 377.8 855.0 389.3 854.0 399.3C852.9 409.2 850.6 419.0 847.2 429.0C843.9 438.9 839.4 449.0 834.0 459.0C828.6 469.0 817.9 484.1 814.7 489.1" stroke="#8a8486" stroke-width="1.0" opacity="0.22"/>
<path d="M592.7 342.7C591.1 347.3 585.6 360.4 582.8 370.2C580.0 380.1 576.3 392.0 576.1 401.9C576.0 411.8 579.7 419.6 581.9 429.6C584.1 439.6 584.4 451.4 589.3 461.8C594.2 472.3 607.6 487.4 611.2 492.5" stroke="#8a8486" stroke-width="1.0" opacity="0.22"/>
<path d="M844.2 344.2C845.9 348.4 853.0 359.6 854.4 369.2C855.8 378.8 853.3 392.2 852.5 401.9C851.7 411.5 852.8 417.7 849.6 427.2C846.4 436.8 838.4 449.2 833.2 459.4C828.0 469.6 821.0 483.7 818.5 488.5" stroke="#8a8486" stroke-width="1.0" opacity="0.22"/>
<path d="M591.5 347.4C589.4 351.3 581.0 361.7 579.0 370.6C577.1 379.5 579.8 390.6 579.7 400.7C579.7 410.8 576.7 421.3 578.6 431.3C580.4 441.3 585.8 450.6 590.9 460.7C596.0 470.7 606.0 486.4 609.0 491.5" stroke="#8a8486" stroke-width="1.0" opacity="0.22"/>
<path d="M848.5 345.8C849.5 349.7 854.2 360.1 854.7 369.1C855.1 378.2 852.1 389.3 851.4 399.9C850.8 410.4 853.4 422.6 850.7 432.7C848.1 442.8 841.2 451.0 835.3 460.5C829.5 470.0 818.9 485.1 815.6 490.0" stroke="#8a8486" stroke-width="1.0" opacity="0.22"/>
<path d="M602.6 468.1C609.1 474.5 626.9 497.2 641.8 506.4C656.7 515.7 675.5 521.5 691.9 523.6C708.4 525.7 724.5 523.4 740.6 519.0C756.8 514.6 774.6 507.1 788.9 497.2C803.3 487.3 820.4 465.8 826.7 459.5" stroke="#8a8486" stroke-width="1.0" opacity="0.25"/>
<path d="M598.2 471.5C604.9 476.7 623.6 493.9 638.5 502.4C653.3 510.9 670.5 518.9 687.2 522.3C703.9 525.7 721.4 526.4 739.0 522.9C756.5 519.3 778.2 511.5 792.3 500.9C806.4 490.4 818.4 466.4 823.6 459.5" stroke="#8a8486" stroke-width="1.0" opacity="0.25"/>
<path d="M597.6 470.0C604.9 475.8 626.1 496.1 641.3 504.7C656.4 513.3 671.8 518.8 688.4 521.5C705.0 524.2 723.5 524.6 740.7 521.0C757.9 517.5 777.3 510.3 791.5 500.1C805.7 489.9 820.2 466.5 826.0 459.7" stroke="#8a8486" stroke-width="1.0" opacity="0.25"/>
<path d="M674.1 360.2C675.1 366.7 674.3 374.3 672.0 380.4C669.7 386.5 665.2 392.7 660.3 396.8C655.3 400.8 648.4 403.9 642.1 404.8C635.8 405.8 628.3 404.9 622.3 402.5C616.4 400.1 610.3 395.5 606.3 390.4C602.3 385.2 599.2 378.2 598.3 371.7C597.3 365.2 598.1 357.5 600.4 351.5C602.7 345.4 607.1 339.2 612.1 335.1C617.1 331.0 624.0 328.0 630.3 327.0C636.6 326.1 644.1 326.9 650.0 329.4C656.0 331.8 662.1 336.4 666.1 341.5C670.1 346.6 673.1 353.7 674.1 360.2Z" stroke="#716b6d" stroke-width="1.9" opacity="0.32"/>
<path d="M675.0 375.4C673.4 381.6 669.7 388.3 665.3 392.9C660.8 397.6 654.3 401.5 648.1 403.3C642.0 405.1 634.4 405.2 628.2 403.6C622.0 402.1 615.4 398.4 610.8 393.9C606.2 389.4 602.4 382.9 600.6 376.7C598.9 370.5 598.8 362.9 600.3 356.6C601.9 350.3 605.6 343.7 610.1 339.0C614.5 334.4 621.0 330.5 627.2 328.7C633.4 326.9 640.9 326.8 647.1 328.3C653.4 329.9 659.9 333.6 664.5 338.1C669.1 342.6 673.0 349.1 674.7 355.3C676.5 361.5 676.6 369.1 675.0 375.4Z" stroke="#716b6d" stroke-width="2.2" opacity="0.32"/>
<path d="M676.2 373.4C675.2 379.9 672.0 387.0 667.9 392.1C663.7 397.3 657.5 401.8 651.4 404.2C645.3 406.6 637.6 407.4 631.2 406.3C624.7 405.3 617.7 402.1 612.6 398.0C607.6 393.8 603.1 387.5 600.8 381.3C598.4 375.1 597.7 367.4 598.7 360.9C599.8 354.3 602.9 347.3 607.1 342.1C611.2 337.0 617.4 332.4 623.6 330.0C629.7 327.7 637.3 326.9 643.8 327.9C650.2 328.9 657.2 332.1 662.3 336.3C667.4 340.4 671.9 346.7 674.2 352.9C676.5 359.1 677.3 366.8 676.2 373.4Z" stroke="#716b6d" stroke-width="2.6" opacity="0.44"/>
<path d="M676.2 366.7C675.9 373.5 673.6 381.1 670.1 386.9C666.5 392.6 660.8 398.0 655.0 401.2C649.1 404.3 641.6 406.1 635.0 405.8C628.4 405.5 621.0 403.2 615.4 399.5C609.8 395.9 604.6 390.0 601.6 384.0C598.5 378.0 596.8 370.2 597.1 363.4C597.4 356.6 599.7 349.0 603.3 343.2C606.8 337.5 612.5 332.1 618.4 328.9C624.2 325.7 631.8 324.0 638.4 324.3C644.9 324.5 652.3 326.9 657.9 330.6C663.5 334.2 668.7 340.1 671.8 346.1C674.8 352.1 676.5 359.9 676.2 366.7Z" stroke="#716b6d" stroke-width="2.7" opacity="0.35"/>
<path d="M678.7 357.3C680.0 364.1 679.5 372.2 677.2 378.8C675.0 385.4 670.4 392.1 665.1 396.7C659.8 401.3 652.4 404.9 645.6 406.3C638.7 407.7 630.5 407.2 623.8 405.0C617.2 402.8 610.4 398.3 605.8 393.1C601.1 387.9 597.5 380.6 596.2 373.8C594.8 367.0 595.3 358.9 597.6 352.3C599.9 345.7 604.5 338.9 609.7 334.3C615.0 329.8 622.4 326.1 629.3 324.8C636.2 323.4 644.4 323.9 651.0 326.1C657.6 328.3 664.5 332.8 669.1 338.0C673.7 343.2 677.3 350.5 678.7 357.3Z" stroke="#716b6d" stroke-width="2.3" opacity="0.39"/>
<path d="M678.4 367.3C678.1 374.0 675.6 381.6 671.9 387.2C668.2 392.9 662.2 398.2 656.1 401.2C650.0 404.3 642.2 405.9 635.3 405.6C628.4 405.2 620.8 402.8 615.0 399.2C609.2 395.5 603.8 389.7 600.7 383.7C597.5 377.7 595.8 370.0 596.2 363.2C596.5 356.5 599.0 349.0 602.7 343.4C606.4 337.7 612.4 332.4 618.5 329.4C624.6 326.3 632.5 324.6 639.3 325.0C646.2 325.3 653.8 327.7 659.6 331.4C665.4 335.1 670.8 340.9 673.9 346.9C677.1 352.9 678.8 360.6 678.4 367.3Z" stroke="#716b6d" stroke-width="2.4" opacity="0.32"/>
<path d="M678.6 360.5C679.7 367.2 678.7 375.1 676.1 381.5C673.6 387.8 668.7 394.3 663.2 398.5C657.8 402.8 650.3 406.0 643.4 407.0C636.5 408.0 628.4 407.2 622.0 404.7C615.5 402.2 609.0 397.5 604.7 392.2C600.3 386.9 597.1 379.5 596.1 372.8C595.1 366.1 596.1 358.1 598.6 351.8C601.2 345.4 606.1 339.0 611.5 334.8C617.0 330.5 624.5 327.3 631.3 326.3C638.2 325.2 646.3 326.1 652.8 328.6C659.2 331.1 665.8 335.8 670.1 341.1C674.4 346.4 677.6 353.7 678.6 360.5Z" stroke="#716b6d" stroke-width="2.6" opacity="0.38"/>
<path d="M679.4 357.3C680.8 364.1 680.3 372.3 678.0 379.0C675.7 385.7 671.0 392.6 665.6 397.2C660.2 401.9 652.6 405.7 645.6 407.1C638.5 408.6 630.1 408.2 623.3 406.0C616.5 403.9 609.4 399.4 604.7 394.2C599.9 389.0 596.2 381.7 594.7 374.8C593.3 368.0 593.9 359.8 596.2 353.1C598.4 346.4 603.1 339.5 608.5 334.9C613.9 330.2 621.5 326.4 628.5 325.0C635.6 323.5 644.0 323.9 650.8 326.1C657.7 328.2 664.7 332.7 669.5 337.9C674.2 343.1 678.0 350.4 679.4 357.3Z" stroke="#716b6d" stroke-width="1.8" opacity="0.41"/>
<path d="M682.8 367.4C682.5 374.4 680.0 382.3 676.0 388.2C672.1 394.1 665.7 399.7 659.1 403.0C652.5 406.3 643.9 408.1 636.4 407.8C628.9 407.6 620.5 405.2 614.1 401.5C607.7 397.8 601.7 391.8 598.1 385.6C594.6 379.4 592.6 371.4 592.8 364.5C593.0 357.5 595.6 349.6 599.5 343.7C603.5 337.8 609.9 332.2 616.5 328.9C623.1 325.7 631.7 323.8 639.2 324.1C646.7 324.3 655.1 326.7 661.5 330.4C667.9 334.1 673.9 340.1 677.4 346.3C681.0 352.5 683.0 360.5 682.8 367.4Z" stroke="#716b6d" stroke-width="2.0" opacity="0.35"/>
<path d="M683.9 359.6C684.9 366.8 683.9 375.2 681.2 382.0C678.4 388.7 673.2 395.6 667.4 400.1C661.6 404.6 653.6 408.0 646.2 409.1C638.9 410.2 630.2 409.3 623.3 406.7C616.4 404.0 609.5 399.0 604.9 393.4C600.3 387.7 596.8 379.9 595.8 372.8C594.7 365.6 595.7 357.2 598.5 350.4C601.2 343.7 606.4 336.9 612.2 332.3C618.1 327.8 626.1 324.4 633.4 323.3C640.7 322.2 649.4 323.1 656.3 325.8C663.2 328.4 670.2 333.4 674.8 339.1C679.4 344.7 682.8 352.5 683.9 359.6Z" stroke="#716b6d" stroke-width="1.6" opacity="0.44"/>
<path d="M685.2 358.6C686.4 365.7 685.4 374.1 682.7 380.9C679.9 387.7 674.6 394.6 668.6 399.3C662.6 403.9 654.4 407.6 646.7 408.9C639.1 410.2 630.1 409.5 622.9 407.1C615.8 404.6 608.4 399.8 603.6 394.3C598.7 388.9 595.1 381.2 593.8 374.1C592.6 367.1 593.6 358.6 596.3 351.8C599.1 345.1 604.4 338.1 610.4 333.4C616.4 328.8 624.7 325.2 632.3 323.9C639.9 322.6 648.9 323.2 656.1 325.7C663.3 328.1 670.6 332.9 675.4 338.4C680.3 343.9 684.0 351.5 685.2 358.6Z" stroke="#716b6d" stroke-width="1.6" opacity="0.38"/>
<path d="M686.7 365.8C686.7 373.1 684.3 381.3 680.4 387.5C676.5 393.8 670.0 399.8 663.2 403.4C656.5 407.0 647.7 409.2 639.9 409.2C632.1 409.2 623.3 406.9 616.6 403.3C609.8 399.7 603.4 393.6 599.5 387.4C595.6 381.1 593.3 372.8 593.3 365.6C593.3 358.4 595.7 350.1 599.6 343.9C603.5 337.6 610.0 331.6 616.7 328.0C623.5 324.4 632.3 322.2 640.1 322.2C647.9 322.2 656.7 324.5 663.4 328.1C670.1 331.7 676.6 337.8 680.5 344.1C684.3 350.3 686.7 358.6 686.7 365.8Z" stroke="#716b6d" stroke-width="1.8" opacity="0.33"/>
<path d="M686.0 376.7C684.3 384.0 680.0 391.6 674.7 397.0C669.4 402.4 661.6 406.9 654.1 409.0C646.7 411.0 637.5 411.2 629.9 409.4C622.2 407.5 614.1 403.3 608.4 398.1C602.6 392.9 597.7 385.4 595.4 378.2C593.1 371.0 592.7 362.2 594.4 354.9C596.2 347.7 600.4 340.0 605.7 334.6C611.0 329.3 618.8 324.7 626.3 322.7C633.8 320.6 642.9 320.5 650.6 322.3C658.2 324.1 666.3 328.4 672.1 333.6C677.8 338.8 682.7 346.3 685.0 353.5C687.4 360.7 687.7 369.5 686.0 376.7Z" stroke="#716b6d" stroke-width="1.8" opacity="0.30"/>
<path d="M687.8 364.2C688.2 371.8 686.3 380.5 682.7 387.3C679.2 394.1 673.0 400.8 666.4 405.0C659.8 409.2 651.1 412.0 643.2 412.4C635.3 412.8 626.3 411.0 619.3 407.6C612.3 404.2 605.4 398.3 601.1 391.9C596.8 385.6 593.9 377.1 593.5 369.5C593.1 361.9 595.0 353.2 598.5 346.4C602.1 339.6 608.3 332.9 614.9 328.7C621.4 324.5 630.2 321.7 638.1 321.3C645.9 320.8 655.0 322.7 662.0 326.1C669.0 329.5 675.9 335.4 680.2 341.8C684.5 348.1 687.4 356.6 687.8 364.2Z" stroke="#716b6d" stroke-width="2.7" opacity="0.39"/>
<path d="M686.3 376.0C685.1 383.3 681.2 391.3 676.1 397.0C671.0 402.7 663.4 407.7 655.9 410.2C648.4 412.7 639.0 413.3 631.1 412.0C623.2 410.6 614.6 406.8 608.4 401.9C602.2 397.0 596.7 389.7 593.9 382.6C591.0 375.5 590.1 366.7 591.4 359.3C592.7 352.0 596.6 344.0 601.6 338.3C606.7 332.6 614.4 327.6 621.8 325.1C629.3 322.6 638.7 322.0 646.6 323.3C654.5 324.7 663.1 328.5 669.3 333.4C675.5 338.3 681.0 345.6 683.9 352.7C686.7 359.8 687.6 368.6 686.3 376.0Z" stroke="#716b6d" stroke-width="2.6" opacity="0.31"/>
<path d="M687.9 360.9C688.9 368.3 687.5 376.9 684.3 383.8C681.0 390.7 675.1 397.7 668.6 402.3C662.1 406.8 653.2 410.2 645.2 411.3C637.1 412.3 627.7 411.2 620.2 408.4C612.7 405.6 605.3 400.4 600.4 394.5C595.6 388.6 592.1 380.6 591.1 373.2C590.2 365.8 591.6 357.1 594.8 350.2C598.0 343.3 603.9 336.4 610.5 331.8C617.0 327.2 625.8 323.8 633.9 322.8C642.0 321.8 651.4 322.8 658.9 325.6C666.3 328.4 673.8 333.7 678.6 339.6C683.5 345.5 687.0 353.5 687.9 360.9Z" stroke="#716b6d" stroke-width="2.5" opacity="0.44"/>
<path d="M687.9 358.4C689.4 366.0 688.6 375.1 685.9 382.4C683.2 389.8 677.8 397.4 671.6 402.5C665.5 407.6 656.9 411.7 648.9 413.2C640.9 414.8 631.5 414.2 623.8 411.8C616.2 409.3 608.3 404.3 603.1 398.5C597.8 392.7 593.7 384.5 592.3 376.9C590.8 369.3 591.6 360.3 594.3 352.9C597.0 345.6 602.4 338.0 608.6 332.9C614.7 327.7 623.3 323.7 631.3 322.1C639.3 320.6 648.7 321.1 656.4 323.6C664.0 326.1 671.8 331.1 677.1 336.9C682.4 342.7 686.4 350.8 687.9 358.4Z" stroke="#716b6d" stroke-width="2.3" opacity="0.38"/>
<path d="M690.6 371.0C690.0 378.7 686.7 387.3 682.0 393.6C677.2 399.9 669.7 405.7 662.0 409.0C654.4 412.2 644.6 413.8 636.2 413.1C627.7 412.5 618.3 409.4 611.3 404.9C604.2 400.5 597.7 393.6 594.0 386.6C590.3 379.6 588.4 370.7 589.0 363.0C589.7 355.3 592.9 346.8 597.7 340.4C602.4 334.1 610.0 328.3 617.6 325.0C625.2 321.8 635.0 320.2 643.5 320.9C652.0 321.5 661.4 324.6 668.4 329.1C675.4 333.5 681.9 340.4 685.6 347.4C689.3 354.4 691.2 363.4 690.6 371.0Z" stroke="#716b6d" stroke-width="2.1" opacity="0.36"/>
<path d="M690.7 374.3C689.6 382.0 685.8 390.5 680.7 396.7C675.6 402.8 667.8 408.3 660.0 411.2C652.2 414.0 642.4 415.1 634.1 413.9C625.7 412.7 616.6 409.0 609.9 404.1C603.3 399.2 597.3 391.8 594.0 384.4C590.8 377.1 589.5 367.9 590.6 360.2C591.7 352.4 595.5 343.9 600.6 337.8C605.7 331.6 613.6 326.1 621.3 323.3C629.1 320.4 638.9 319.4 647.2 320.5C655.6 321.7 664.7 325.4 671.4 330.3C678.1 335.2 684.1 342.7 687.3 350.0C690.5 357.3 691.8 366.5 690.7 374.3Z" stroke="#716b6d" stroke-width="2.1" opacity="0.31"/>
<path d="M691.7 365.0C691.9 372.7 689.5 381.5 685.4 388.4C681.3 395.2 674.3 401.8 666.9 405.9C659.5 410.0 649.8 412.6 641.1 412.9C632.4 413.1 622.5 411.1 614.9 407.4C607.3 403.8 599.9 397.6 595.4 391.0C590.9 384.4 588.0 375.7 587.8 368.0C587.6 360.2 589.9 351.4 594.1 344.6C598.2 337.7 605.2 331.1 612.6 327.0C620.0 322.9 629.7 320.3 638.4 320.0C647.1 319.8 656.9 321.9 664.6 325.5C672.2 329.2 679.5 335.4 684.1 341.9C688.6 348.5 691.5 357.2 691.7 365.0Z" stroke="#716b6d" stroke-width="2.2" opacity="0.29"/>
<path d="M829.1 358.3C830.3 363.6 830.0 370.1 828.2 375.4C826.5 380.6 822.8 386.1 818.6 389.9C814.3 393.7 808.4 396.7 802.7 398.0C797.1 399.3 790.4 399.1 784.9 397.5C779.5 396.0 773.8 392.6 770.0 388.6C766.1 384.6 763.0 378.9 761.8 373.5C760.6 368.2 760.9 361.7 762.7 356.5C764.4 351.2 768.1 345.7 772.3 341.9C776.6 338.1 782.6 335.1 788.2 333.8C793.8 332.5 800.5 332.7 806.0 334.3C811.5 335.9 817.1 339.3 821.0 343.3C824.8 347.3 827.9 352.9 829.1 358.3Z" stroke="#716b6d" stroke-width="2.2" opacity="0.35"/>
<path d="M831.0 372.1C830.1 377.8 827.3 383.9 823.5 388.3C819.8 392.7 814.2 396.6 808.6 398.6C803.1 400.6 796.1 401.2 790.2 400.3C784.3 399.3 777.9 396.6 773.2 393.0C768.5 389.3 764.4 383.9 762.2 378.5C760.0 373.2 759.2 366.5 760.1 360.9C761.0 355.3 763.8 349.2 767.6 344.8C771.3 340.4 776.9 336.5 782.5 334.5C788.0 332.5 795.0 331.8 800.9 332.8C806.8 333.7 813.2 336.5 817.9 340.1C822.6 343.7 826.7 349.2 828.9 354.5C831.1 359.9 831.9 366.5 831.0 372.1Z" stroke="#716b6d" stroke-width="1.8" opacity="0.46"/>
<path d="M831.3 374.2C830.0 379.8 826.9 385.8 823.0 390.1C819.2 394.4 813.5 398.0 808.0 399.8C802.5 401.5 795.7 401.9 790.1 400.6C784.5 399.4 778.5 396.3 774.2 392.4C769.9 388.5 766.3 382.8 764.5 377.3C762.8 371.8 762.5 365.0 763.7 359.4C765.0 353.8 768.1 347.8 771.9 343.5C775.8 339.2 781.5 335.6 787.0 333.8C792.5 332.0 799.3 331.7 804.9 333.0C810.5 334.2 816.5 337.3 820.8 341.2C825.1 345.1 828.7 350.8 830.4 356.3C832.2 361.8 832.5 368.5 831.3 374.2Z" stroke="#716b6d" stroke-width="1.7" opacity="0.34"/>
<path d="M830.6 360.7C831.7 366.5 831.1 373.5 829.1 379.0C827.1 384.6 823.1 390.3 818.5 394.1C814.0 398.0 807.7 400.9 801.8 402.0C796.0 403.0 789.0 402.5 783.4 400.5C777.8 398.5 772.1 394.5 768.3 390.0C764.4 385.5 761.5 379.2 760.4 373.4C759.4 367.6 760.0 360.6 762.0 355.1C764.0 349.5 768.0 343.8 772.5 340.0C777.1 336.2 783.4 333.2 789.2 332.1C795.1 331.1 802.0 331.7 807.6 333.7C813.2 335.6 819.0 339.6 822.8 344.1C826.6 348.6 829.6 354.9 830.6 360.7Z" stroke="#716b6d" stroke-width="2.2" opacity="0.45"/>
<path d="M831.4 360.5C832.3 366.1 831.5 372.8 829.3 378.2C827.1 383.5 823.0 389.0 818.3 392.6C813.6 396.3 807.1 399.0 801.2 400.0C795.2 400.9 788.2 400.3 782.6 398.3C777.0 396.3 771.4 392.5 767.6 388.1C763.9 383.7 761.0 377.6 760.1 371.9C759.2 366.3 760.0 359.6 762.2 354.3C764.4 348.9 768.6 343.5 773.3 339.8C778.0 336.2 784.4 333.4 790.3 332.5C796.3 331.5 803.3 332.1 808.9 334.1C814.5 336.1 820.2 340.0 823.9 344.4C827.7 348.8 830.5 354.9 831.4 360.5Z" stroke="#716b6d" stroke-width="1.8" opacity="0.45"/>
<path d="M835.3 366.4C835.2 372.2 833.1 378.9 829.9 383.9C826.6 389.0 821.3 393.8 815.8 396.6C810.2 399.5 803.0 401.1 796.7 401.0C790.3 400.9 783.2 399.0 777.7 396.0C772.3 393.0 767.1 388.0 764.0 382.9C760.9 377.8 759.1 371.1 759.2 365.2C759.3 359.3 761.3 352.7 764.5 347.6C767.8 342.6 773.1 337.8 778.7 334.9C784.2 332.1 791.4 330.4 797.8 330.5C804.1 330.6 811.3 332.5 816.7 335.5C822.2 338.5 827.3 343.5 830.4 348.6C833.5 353.8 835.4 360.5 835.3 366.4Z" stroke="#716b6d" stroke-width="2.4" opacity="0.34"/>
<path d="M834.3 376.6C832.8 382.4 829.2 388.5 824.8 392.8C820.4 397.0 813.9 400.5 807.7 402.0C801.5 403.6 793.9 403.5 787.6 402.0C781.3 400.4 774.5 396.8 769.8 392.5C765.1 388.2 761.0 382.1 759.1 376.2C757.3 370.4 757.0 363.3 758.5 357.5C759.9 351.7 763.5 345.6 767.9 341.3C772.4 337.1 778.8 333.6 785.0 332.0C791.2 330.5 798.8 330.5 805.1 332.1C811.5 333.7 818.2 337.3 822.9 341.6C827.7 345.9 831.7 352.0 833.6 357.8C835.5 363.7 835.7 370.8 834.3 376.6Z" stroke="#716b6d" stroke-width="2.4" opacity="0.35"/>
<path d="M834.4 373.4C833.6 379.5 830.7 386.2 826.8 391.1C822.8 396.0 816.8 400.4 810.8 402.7C804.8 405.0 797.2 405.9 790.7 405.0C784.3 404.2 777.2 401.3 772.0 397.5C766.8 393.7 762.1 387.9 759.6 382.2C757.1 376.4 756.0 369.2 756.9 363.1C757.7 357.0 760.6 350.3 764.5 345.4C768.4 340.5 774.5 336.1 780.5 333.8C786.5 331.5 794.1 330.6 800.5 331.5C807.0 332.3 814.1 335.2 819.2 339.0C824.4 342.8 829.1 348.6 831.6 354.3C834.2 360.1 835.2 367.3 834.4 373.4Z" stroke="#716b6d" stroke-width="2.1" opacity="0.31"/>
<path d="M833.1 377.4C831.5 383.6 827.9 390.2 823.4 394.8C818.9 399.3 812.4 403.2 806.1 404.9C799.9 406.6 792.2 406.8 785.9 405.2C779.6 403.6 772.9 400.0 768.1 395.5C763.4 391.1 759.4 384.6 757.6 378.5C755.7 372.4 755.6 364.9 757.1 358.7C758.6 352.5 762.3 346.0 766.8 341.4C771.2 336.8 777.8 333.0 784.0 331.2C790.3 329.5 797.9 329.4 804.2 330.9C810.6 332.5 817.3 336.2 822.0 340.6C826.7 345.0 830.7 351.5 832.5 357.6C834.4 363.8 834.6 371.3 833.1 377.4Z" stroke="#716b6d" stroke-width="2.3" opacity="0.40"/>
<path d="M834.2 365.0C834.4 371.4 832.7 378.8 829.6 384.4C826.5 390.1 821.3 395.6 815.7 399.0C810.1 402.4 802.8 404.6 796.2 404.8C789.7 405.1 782.2 403.4 776.4 400.4C770.6 397.3 765.0 392.2 761.6 386.7C758.1 381.3 755.9 374.1 755.6 367.6C755.4 361.2 757.2 353.9 760.2 348.2C763.3 342.5 768.6 337.0 774.2 333.6C779.7 330.2 787.1 328.0 793.6 327.8C800.2 327.6 807.7 329.3 813.4 332.3C819.2 335.3 824.8 340.4 828.3 345.9C831.8 351.3 834.0 358.6 834.2 365.0Z" stroke="#716b6d" stroke-width="2.2" opacity="0.44"/>
<path d="M835.0 365.1C835.4 371.4 833.9 378.7 831.0 384.4C828.1 390.1 823.1 395.7 817.6 399.2C812.1 402.8 804.8 405.3 798.2 405.7C791.6 406.2 784.0 404.8 778.0 402.1C772.1 399.4 766.3 394.6 762.6 389.4C758.9 384.1 756.4 377.2 755.9 370.9C755.5 364.6 756.9 357.3 759.8 351.6C762.7 345.9 767.8 340.3 773.3 336.8C778.8 333.2 786.1 330.7 792.7 330.3C799.3 329.8 806.9 331.2 812.8 333.9C818.8 336.6 824.6 341.4 828.3 346.6C832.0 351.9 834.5 358.8 835.0 365.1Z" stroke="#716b6d" stroke-width="1.7" opacity="0.34"/>
<path d="M837.0 367.6C837.1 374.2 835.1 381.8 831.8 387.5C828.5 393.3 822.9 398.9 817.1 402.3C811.2 405.7 803.5 407.8 796.8 407.9C790.0 408.0 782.2 406.0 776.3 402.8C770.4 399.6 764.7 394.1 761.2 388.4C757.7 382.7 755.6 375.2 755.5 368.6C755.4 362.0 757.4 354.5 760.7 348.7C764.0 342.9 769.6 337.3 775.4 333.9C781.3 330.5 789.0 328.4 795.8 328.3C802.5 328.3 810.3 330.2 816.2 333.4C822.1 336.7 827.8 342.1 831.3 347.8C834.8 353.5 836.9 361.0 837.0 367.6Z" stroke="#716b6d" stroke-width="1.8" opacity="0.45"/>
<path d="M837.1 373.1C836.1 379.9 832.9 387.2 828.6 392.6C824.3 397.9 817.7 402.7 811.2 405.2C804.6 407.7 796.4 408.6 789.4 407.7C782.4 406.7 774.8 403.5 769.2 399.3C763.7 395.0 758.6 388.6 756.0 382.3C753.3 375.9 752.3 368.0 753.2 361.2C754.2 354.5 757.4 347.1 761.7 341.8C766.1 336.4 772.7 331.6 779.2 329.1C785.7 326.6 793.9 325.7 800.9 326.7C807.9 327.7 815.5 330.8 821.1 335.1C826.7 339.3 831.7 345.7 834.4 352.1C837.0 358.4 838.1 366.4 837.1 373.1Z" stroke="#716b6d" stroke-width="2.1" opacity="0.33"/>
<path d="M838.6 367.3C838.8 374.1 836.9 381.9 833.5 387.9C830.2 393.9 824.5 399.7 818.5 403.3C812.5 406.9 804.5 409.2 797.5 409.4C790.4 409.6 782.4 407.7 776.2 404.5C770.0 401.3 764.0 395.8 760.3 390.0C756.6 384.2 754.2 376.5 754.0 369.7C753.8 362.8 755.8 355.1 759.1 349.0C762.5 343.0 768.2 337.2 774.2 333.6C780.2 330.1 788.1 327.8 795.2 327.6C802.2 327.4 810.3 329.2 816.5 332.5C822.7 335.7 828.7 341.2 832.4 347.0C836.1 352.8 838.4 360.5 838.6 367.3Z" stroke="#716b6d" stroke-width="2.7" opacity="0.41"/>
<path d="M840.1 361.8C841.0 368.6 839.8 376.7 837.0 383.0C834.2 389.4 828.9 395.8 823.1 400.1C817.4 404.3 809.5 407.4 802.3 408.4C795.1 409.3 786.7 408.3 780.0 405.8C773.3 403.2 766.6 398.3 762.2 392.9C757.8 387.5 754.6 380.0 753.7 373.2C752.8 366.4 754.0 358.4 756.8 352.0C759.6 345.7 764.9 339.2 770.6 335.0C776.4 330.8 784.3 327.6 791.5 326.7C798.7 325.7 807.1 326.7 813.8 329.3C820.5 331.9 827.2 336.7 831.6 342.2C836.0 347.6 839.2 355.0 840.1 361.8Z" stroke="#716b6d" stroke-width="1.7" opacity="0.42"/>
<path d="M839.3 372.2C838.9 379.1 836.3 386.7 832.3 392.5C828.4 398.3 822.1 403.6 815.7 406.7C809.3 409.8 801.0 411.5 793.8 411.1C786.6 410.7 778.5 408.2 772.5 404.4C766.4 400.6 760.7 394.6 757.5 388.4C754.2 382.3 752.4 374.4 752.8 367.5C753.2 360.7 755.8 353.0 759.7 347.2C763.6 341.5 769.9 336.1 776.3 333.0C782.8 329.9 791.0 328.2 798.3 328.6C805.5 329.0 813.5 331.6 819.6 335.3C825.6 339.1 831.3 345.1 834.6 351.3C837.9 357.4 839.6 365.3 839.3 372.2Z" stroke="#716b6d" stroke-width="2.2" opacity="0.40"/>
<path d="M839.1 377.5C837.7 384.3 833.9 391.7 829.1 396.9C824.3 402.2 817.0 406.7 810.0 408.9C803.0 411.1 794.2 411.5 786.9 410.1C779.6 408.6 771.7 404.9 766.0 400.2C760.3 395.5 755.3 388.6 752.8 381.9C750.4 375.2 749.7 367.0 751.0 360.1C752.4 353.2 756.2 345.8 761.0 340.6C765.8 335.4 773.1 330.9 780.1 328.7C787.1 326.5 795.9 326.0 803.2 327.5C810.5 328.9 818.4 332.6 824.1 337.3C829.8 342.0 834.8 349.0 837.2 355.6C839.7 362.3 840.4 370.6 839.1 377.5Z" stroke="#716b6d" stroke-width="2.5" opacity="0.41"/>
<path d="M842.0 368.8C842.1 376.1 840.0 384.4 836.4 390.7C832.8 397.1 826.7 403.3 820.2 407.1C813.7 410.9 805.2 413.3 797.7 413.5C790.1 413.6 781.5 411.6 774.9 408.2C768.3 404.7 761.8 398.8 757.9 392.6C754.0 386.4 751.5 378.2 751.3 370.9C751.2 363.7 753.3 355.4 756.9 349.0C760.5 342.6 766.6 336.4 773.1 332.6C779.5 328.9 788.1 326.4 795.6 326.3C803.2 326.1 811.8 328.1 818.4 331.6C825.0 335.1 831.5 340.9 835.4 347.1C839.3 353.3 841.8 361.5 842.0 368.8Z" stroke="#716b6d" stroke-width="1.9" opacity="0.30"/>
<path d="M840.7 377.2C839.5 384.5 835.7 392.3 830.8 398.0C825.8 403.6 818.4 408.5 811.1 411.0C803.8 413.5 794.7 414.1 787.1 412.8C779.4 411.5 771.1 407.7 765.0 402.9C759.0 398.2 753.7 391.0 751.0 384.0C748.2 377.1 747.3 368.4 748.6 361.1C749.9 353.9 753.6 346.0 758.6 340.4C763.5 334.8 770.9 329.9 778.2 327.4C785.5 324.9 794.6 324.2 802.3 325.6C810.0 326.9 818.3 330.6 824.3 335.4C830.3 340.2 835.6 347.4 838.4 354.3C841.1 361.3 842.0 369.9 840.7 377.2Z" stroke="#716b6d" stroke-width="2.5" opacity="0.33"/>
<path d="M842.7 373.9C842.2 381.3 839.2 389.5 834.8 395.6C830.4 401.6 823.5 407.3 816.4 410.5C809.3 413.7 800.3 415.3 792.4 414.7C784.6 414.2 775.8 411.3 769.3 407.1C762.7 403.0 756.7 396.4 753.2 389.8C749.7 383.1 747.9 374.6 748.4 367.2C749.0 359.9 752.0 351.7 756.3 345.6C760.7 339.5 767.7 333.9 774.7 330.7C781.8 327.5 790.9 325.9 798.7 326.4C806.6 327.0 815.3 329.9 821.8 334.0C828.4 338.2 834.5 344.8 837.9 351.4C841.4 358.1 843.2 366.6 842.7 373.9Z" stroke="#716b6d" stroke-width="2.8" opacity="0.32"/>
<path d="M650.6 357.4C650.3 360.0 649.5 362.8 648.4 365.0C647.3 367.3 645.7 369.4 644.0 370.9C642.3 372.3 640.3 373.3 638.4 373.7C636.4 374.0 634.3 373.8 632.5 373.0C630.8 372.2 629.0 370.7 627.7 368.9C626.4 367.1 625.4 364.6 624.9 362.2C624.3 359.8 624.2 356.9 624.5 354.3C624.8 351.7 625.6 348.9 626.7 346.6C627.8 344.4 629.4 342.2 631.1 340.8C632.8 339.4 634.9 338.3 636.8 338.0C638.7 337.6 640.8 337.9 642.6 338.7C644.3 339.5 646.1 341.0 647.4 342.8C648.7 344.6 649.7 347.0 650.3 349.5C650.8 351.9 650.9 354.8 650.6 357.4Z" stroke="#767072" stroke-width="1.6" opacity="0.42"/>
<path d="M651.5 359.4C651.2 362.0 650.4 364.9 649.2 367.1C648.0 369.4 646.3 371.5 644.5 373.0C642.7 374.4 640.4 375.5 638.3 375.8C636.2 376.1 633.9 375.9 632.0 375.0C630.0 374.2 628.1 372.7 626.7 370.8C625.3 369.0 624.1 366.5 623.5 364.0C622.9 361.6 622.7 358.6 623.0 356.0C623.3 353.3 624.2 350.5 625.4 348.2C626.6 346.0 628.3 343.8 630.1 342.4C631.9 341.0 634.2 339.9 636.3 339.6C638.3 339.2 640.7 339.5 642.6 340.3C644.5 341.2 646.5 342.7 647.9 344.5C649.3 346.4 650.5 348.9 651.1 351.3C651.7 353.8 651.9 356.8 651.5 359.4Z" stroke="#767072" stroke-width="1.6" opacity="0.42"/>
<path d="M650.6 358.0C650.2 360.9 649.4 363.9 648.2 366.4C647.1 368.8 645.5 371.2 643.8 372.8C642.1 374.4 640.1 375.5 638.1 375.9C636.2 376.4 634.1 376.1 632.4 375.2C630.6 374.4 628.9 372.8 627.6 370.8C626.3 368.9 625.3 366.2 624.8 363.6C624.3 360.9 624.2 357.7 624.6 354.9C624.9 352.1 625.7 349.0 626.9 346.5C628.0 344.1 629.6 341.7 631.3 340.1C633.0 338.5 635.1 337.4 637.0 337.0C638.9 336.6 641.0 336.8 642.8 337.7C644.5 338.5 646.3 340.1 647.5 342.1C648.8 344.0 649.8 346.7 650.3 349.4C650.8 352.0 650.9 355.2 650.6 358.0Z" stroke="#767072" stroke-width="1.6" opacity="0.42"/>
<path d="M651.1 358.9C650.8 361.7 649.9 364.8 648.7 367.3C647.5 369.8 645.8 372.1 644.0 373.7C642.2 375.3 639.9 376.5 637.9 376.9C635.8 377.3 633.5 377.0 631.6 376.1C629.7 375.2 627.8 373.6 626.4 371.6C625.1 369.6 623.9 366.9 623.4 364.3C622.8 361.6 622.7 358.4 623.0 355.5C623.3 352.6 624.2 349.5 625.4 347.1C626.6 344.6 628.4 342.2 630.2 340.6C632.0 339.1 634.2 337.9 636.3 337.5C638.3 337.1 640.6 337.4 642.5 338.3C644.4 339.1 646.3 340.8 647.7 342.8C649.1 344.7 650.2 347.4 650.8 350.1C651.3 352.8 651.5 356.0 651.1 358.9Z" stroke="#767072" stroke-width="1.6" opacity="0.42"/>
<path d="M650.9 359.2C650.5 362.0 649.7 365.0 648.5 367.5C647.3 369.9 645.5 372.2 643.7 373.8C641.9 375.4 639.7 376.5 637.6 376.9C635.5 377.3 633.2 377.0 631.3 376.1C629.4 375.2 627.5 373.6 626.1 371.7C624.7 369.7 623.6 367.1 623.0 364.4C622.4 361.8 622.3 358.6 622.6 355.8C622.9 353.0 623.8 349.9 625.0 347.5C626.2 345.0 627.9 342.7 629.8 341.2C631.6 339.6 633.8 338.5 635.9 338.1C638.0 337.7 640.3 338.0 642.2 338.8C644.1 339.7 646.0 341.3 647.4 343.3C648.8 345.2 649.9 347.9 650.5 350.6C651.1 353.2 651.2 356.4 650.9 359.2Z" stroke="#767072" stroke-width="1.6" opacity="0.42"/>
<path d="M650.5 358.9C650.2 361.5 649.3 364.4 648.2 366.6C647.0 368.9 645.3 371.0 643.6 372.5C641.8 373.9 639.6 375.0 637.6 375.3C635.6 375.7 633.3 375.4 631.5 374.6C629.6 373.7 627.7 372.2 626.3 370.4C625.0 368.6 623.9 366.1 623.3 363.6C622.7 361.1 622.5 358.2 622.8 355.6C623.2 353.0 624.0 350.1 625.2 347.9C626.3 345.6 628.0 343.5 629.8 342.0C631.5 340.6 633.7 339.5 635.7 339.2C637.7 338.8 640.0 339.1 641.9 339.9C643.8 340.8 645.6 342.3 647.0 344.1C648.4 345.9 649.5 348.4 650.1 350.9C650.7 353.3 650.8 356.3 650.5 358.9Z" stroke="#767072" stroke-width="1.6" opacity="0.42"/>
<path d="M808.8 358.1C808.7 361.1 808.1 364.4 807.1 367.0C806.2 369.7 804.6 372.3 803.0 374.1C801.3 376.0 799.2 377.4 797.2 378.0C795.2 378.6 792.8 378.5 790.9 377.8C788.9 377.1 786.8 375.5 785.3 373.6C783.7 371.7 782.4 369.0 781.6 366.3C780.8 363.5 780.3 360.2 780.4 357.2C780.5 354.2 781.1 350.9 782.1 348.3C783.1 345.6 784.6 343.0 786.3 341.1C787.9 339.3 790.1 337.9 792.1 337.3C794.1 336.7 796.4 336.8 798.4 337.5C800.4 338.2 802.4 339.8 804.0 341.7C805.5 343.6 806.9 346.3 807.7 349.0C808.5 351.8 808.9 355.1 808.8 358.1Z" stroke="#767072" stroke-width="1.6" opacity="0.42"/>
<path d="M808.7 356.9C808.7 359.9 808.0 363.2 807.1 365.9C806.1 368.6 804.6 371.2 802.9 373.0C801.2 374.8 799.1 376.2 797.1 376.8C795.0 377.4 792.7 377.4 790.7 376.6C788.7 375.9 786.7 374.4 785.1 372.5C783.6 370.5 782.2 367.8 781.4 365.1C780.6 362.4 780.1 359.0 780.2 356.0C780.3 353.0 780.9 349.7 781.9 347.0C782.9 344.4 784.4 341.7 786.1 339.9C787.8 338.1 789.9 336.7 791.9 336.1C794.0 335.5 796.3 335.5 798.3 336.3C800.3 337.0 802.3 338.5 803.9 340.4C805.4 342.4 806.8 345.1 807.6 347.8C808.4 350.5 808.8 353.9 808.7 356.9Z" stroke="#767072" stroke-width="1.6" opacity="0.42"/>
<path d="M809.0 357.1C808.9 359.8 808.3 362.7 807.3 365.1C806.4 367.5 804.9 369.9 803.2 371.5C801.6 373.1 799.5 374.4 797.5 374.9C795.5 375.4 793.2 375.4 791.2 374.7C789.3 374.1 787.2 372.7 785.7 371.0C784.1 369.2 782.8 366.8 782.0 364.4C781.2 361.9 780.7 359.0 780.8 356.3C780.9 353.6 781.5 350.6 782.5 348.2C783.4 345.8 784.9 343.5 786.6 341.9C788.2 340.3 790.3 339.0 792.3 338.5C794.3 337.9 796.6 338.0 798.6 338.6C800.5 339.3 802.6 340.7 804.1 342.4C805.6 344.1 807.0 346.5 807.8 349.0C808.6 351.4 809.0 354.4 809.0 357.1Z" stroke="#767072" stroke-width="1.6" opacity="0.42"/>
<path d="M811.3 358.1C811.2 361.1 810.6 364.3 809.5 366.9C808.4 369.5 806.8 372.1 804.9 373.9C803.1 375.6 800.7 377.0 798.5 377.6C796.3 378.2 793.7 378.1 791.5 377.4C789.3 376.7 787.0 375.2 785.3 373.3C783.6 371.4 782.1 368.7 781.1 366.1C780.2 363.4 779.8 360.1 779.8 357.2C779.9 354.3 780.6 351.0 781.7 348.4C782.7 345.8 784.4 343.3 786.3 341.5C788.1 339.7 790.4 338.3 792.7 337.7C794.9 337.2 797.5 337.2 799.7 337.9C801.9 338.7 804.1 340.2 805.9 342.1C807.6 344.0 809.1 346.6 810.0 349.3C810.9 352.0 811.4 355.2 811.3 358.1Z" stroke="#767072" stroke-width="1.6" opacity="0.42"/>
<path d="M809.2 358.0C809.1 361.0 808.5 364.2 807.5 366.9C806.5 369.5 804.9 372.1 803.1 373.9C801.4 375.7 799.2 377.1 797.0 377.7C794.9 378.3 792.5 378.2 790.4 377.5C788.3 376.8 786.2 375.3 784.6 373.4C782.9 371.5 781.5 368.8 780.6 366.1C779.8 363.4 779.3 360.1 779.4 357.1C779.5 354.2 780.2 350.9 781.2 348.3C782.2 345.6 783.8 343.0 785.5 341.2C787.3 339.4 789.5 338.1 791.6 337.5C793.7 336.9 796.2 336.9 798.2 337.7C800.3 338.4 802.5 339.9 804.1 341.8C805.7 343.7 807.2 346.4 808.0 349.1C808.9 351.8 809.3 355.1 809.2 358.0Z" stroke="#767072" stroke-width="1.6" opacity="0.42"/>
<path d="M810.0 358.6C809.9 361.6 809.3 364.9 808.3 367.5C807.4 370.2 805.8 372.8 804.2 374.6C802.5 376.4 800.4 377.8 798.4 378.4C796.4 379.0 794.1 379.0 792.1 378.2C790.1 377.5 788.1 376.0 786.5 374.1C785.0 372.2 783.6 369.5 782.8 366.8C782.0 364.0 781.6 360.7 781.7 357.8C781.8 354.8 782.4 351.5 783.4 348.8C784.3 346.2 785.8 343.6 787.5 341.8C789.2 339.9 791.3 338.6 793.3 337.9C795.3 337.3 797.6 337.4 799.6 338.1C801.6 338.9 803.6 340.4 805.2 342.3C806.7 344.2 808.1 346.9 808.9 349.6C809.7 352.3 810.1 355.6 810.0 358.6Z" stroke="#767072" stroke-width="1.6" opacity="0.42"/>
<circle cx="640.0" cy="350.2" r="3.6" fill="#8d8789" opacity=".35" stroke="none"/>
<path d="M644.3 350.6C644.3 351.2 644.1 351.9 643.9 352.4C643.7 352.9 643.3 353.4 642.8 353.8C642.4 354.2 641.8 354.4 641.3 354.6C640.7 354.7 640.1 354.7 639.6 354.6C639.0 354.4 638.4 354.2 638.0 353.8C637.6 353.4 637.2 352.9 636.9 352.4C636.7 351.9 636.5 351.2 636.5 350.6C636.5 350.1 636.7 349.4 636.9 348.9C637.2 348.4 637.6 347.9 638.0 347.5C638.4 347.1 639.0 346.8 639.6 346.7C640.1 346.6 640.7 346.6 641.3 346.7C641.8 346.8 642.4 347.1 642.8 347.5C643.3 347.9 643.7 348.4 643.9 348.9C644.1 349.4 644.3 350.1 644.3 350.6Z" stroke="#6a6466" stroke-width="1.3" opacity="0.50"/>
<path d="M644.7 349.7C644.7 350.5 644.5 351.3 644.2 351.9C643.9 352.6 643.3 353.2 642.8 353.6C642.2 354.1 641.5 354.4 640.7 354.6C640.0 354.8 639.2 354.8 638.5 354.6C637.8 354.4 637.0 354.1 636.5 353.6C635.9 353.2 635.4 352.6 635.1 351.9C634.7 351.3 634.6 350.5 634.6 349.7C634.6 349.0 634.7 348.2 635.1 347.6C635.4 346.9 635.9 346.3 636.5 345.8C637.0 345.4 637.8 345.0 638.5 344.9C639.2 344.7 640.0 344.7 640.7 344.9C641.5 345.0 642.2 345.4 642.8 345.8C643.3 346.3 643.9 346.9 644.2 347.6C644.5 348.2 644.7 349.0 644.7 349.7Z" stroke="#6a6466" stroke-width="1.3" opacity="0.50"/>
<path d="M644.8 350.5C644.8 351.1 644.7 351.8 644.4 352.3C644.1 352.9 643.6 353.4 643.1 353.8C642.5 354.2 641.8 354.4 641.2 354.6C640.5 354.7 639.8 354.7 639.1 354.6C638.4 354.4 637.7 354.2 637.2 353.8C636.7 353.4 636.2 352.9 635.9 352.3C635.6 351.8 635.4 351.1 635.4 350.5C635.4 349.9 635.6 349.3 635.9 348.7C636.2 348.2 636.7 347.6 637.2 347.3C637.7 346.9 638.4 346.6 639.1 346.5C639.8 346.3 640.5 346.3 641.2 346.5C641.8 346.6 642.5 346.9 643.1 347.3C643.6 347.6 644.1 348.2 644.4 348.7C644.7 349.3 644.8 349.9 644.8 350.5Z" stroke="#6a6466" stroke-width="1.3" opacity="0.50"/>
<circle cx="794.0" cy="353.6" r="3.6" fill="#8d8789" opacity=".35" stroke="none"/>
<path d="M798.5 353.2C798.5 353.8 798.3 354.4 798.0 354.9C797.7 355.5 797.2 356.0 796.7 356.3C796.1 356.7 795.4 357.0 794.7 357.1C794.0 357.3 793.2 357.3 792.5 357.1C791.8 357.0 791.1 356.7 790.5 356.3C790.0 356.0 789.5 355.5 789.2 354.9C788.9 354.4 788.7 353.8 788.7 353.2C788.7 352.6 788.9 352.0 789.2 351.5C789.5 350.9 790.0 350.4 790.5 350.0C791.1 349.7 791.8 349.4 792.5 349.3C793.2 349.1 794.0 349.1 794.7 349.3C795.4 349.4 796.1 349.7 796.7 350.0C797.2 350.4 797.7 350.9 798.0 351.5C798.3 352.0 798.5 352.6 798.5 353.2Z" stroke="#6a6466" stroke-width="1.3" opacity="0.50"/>
<path d="M797.6 353.5C797.6 354.1 797.4 354.8 797.2 355.3C796.9 355.8 796.6 356.4 796.1 356.7C795.7 357.1 795.2 357.4 794.6 357.5C794.1 357.7 793.5 357.7 793.0 357.5C792.5 357.4 791.9 357.1 791.5 356.7C791.1 356.4 790.7 355.8 790.5 355.3C790.2 354.8 790.1 354.1 790.1 353.5C790.1 352.9 790.2 352.3 790.5 351.7C790.7 351.2 791.1 350.7 791.5 350.3C791.9 349.9 792.5 349.6 793.0 349.5C793.5 349.4 794.1 349.4 794.6 349.5C795.2 349.6 795.7 349.9 796.1 350.3C796.6 350.7 796.9 351.2 797.2 351.7C797.4 352.3 797.6 352.9 797.6 353.5Z" stroke="#6a6466" stroke-width="1.3" opacity="0.50"/>
<path d="M798.1 353.8C798.1 354.4 797.9 355.1 797.6 355.6C797.4 356.2 796.9 356.7 796.5 357.1C796.0 357.5 795.3 357.8 794.7 357.9C794.1 358.1 793.4 358.1 792.8 357.9C792.2 357.8 791.6 357.5 791.1 357.1C790.6 356.7 790.2 356.2 789.9 355.6C789.6 355.1 789.5 354.4 789.5 353.8C789.5 353.2 789.6 352.5 789.9 352.0C790.2 351.4 790.6 350.9 791.1 350.5C791.6 350.1 792.2 349.8 792.8 349.7C793.4 349.6 794.1 349.6 794.7 349.7C795.3 349.8 796.0 350.1 796.5 350.5C796.9 350.9 797.4 351.4 797.6 352.0C797.9 352.5 798.1 353.2 798.1 353.8Z" stroke="#6a6466" stroke-width="1.3" opacity="0.50"/>
<path d="M664.8 378.5C664.1 379.7 662.2 383.8 660.2 385.9C658.1 388.0 655.4 389.9 652.6 391.3C649.7 392.6 646.4 393.5 643.1 393.8C639.9 394.2 636.4 394.0 633.3 393.2C630.1 392.5 626.9 391.2 624.4 389.6C621.8 387.9 618.8 384.4 617.7 383.3" stroke="#8a8486" stroke-width="1.0" opacity="0.35"/>
<path d="M822.5 372.8C821.7 374.3 820.1 379.2 818.0 381.9C815.9 384.5 813.0 387.0 809.8 388.6C806.7 390.3 802.9 391.4 799.3 391.8C795.6 392.2 791.6 391.9 788.1 391.0C784.6 390.0 781.1 388.3 778.3 386.2C775.6 384.0 772.7 379.6 771.6 378.3" stroke="#8a8486" stroke-width="1.2" opacity="0.40"/>
<path d="M686.0 324.0L751.0 323.5" stroke="#7a7476" stroke-width="1.2" opacity="0.50"/>
<path d="M690.0 325.9L748.0 325.7" stroke="#7a7476" stroke-width="1.2" opacity="0.50"/>
<path d="M701.0 329.0L745.0 329.4" stroke="#7a7476" stroke-width="1.2" opacity="0.50"/>
<path d="M704.0 333.4L744.0 333.9" stroke="#7a7476" stroke-width="1.2" opacity="0.50"/>
<path d="M700.0 337.8L730.0 338.3" stroke="#7a7476" stroke-width="1.2" opacity="0.50"/>
<path d="M710.0 349.5L740.0 349.0" stroke="#7a7476" stroke-width="1.2" opacity="0.50"/>
<path d="M712.0 346.4L738.0 345.3" stroke="#7a7476" stroke-width="1.2" opacity="0.50"/>
<path d="M581.2 413.3C584.5 414.5 593.0 417.9 601.2 420.4C609.4 423.0 620.6 427.1 630.4 428.7C640.3 430.3 649.2 429.4 660.2 430.0C671.2 430.6 685.0 432.3 696.5 432.4C707.9 432.5 717.8 431.0 728.9 430.5C739.9 430.0 752.6 429.8 762.9 429.2C773.3 428.5 781.9 428.1 791.1 426.6C800.3 425.1 810.3 421.7 818.2 420.3C826.2 418.8 833.2 418.9 838.7 418.0C844.3 417.1 849.4 415.6 851.6 415.1" stroke="#6f696b" stroke-width="1.7" opacity="0.39"/>
<path d="M580.7 415.5C584.5 416.4 595.4 419.1 603.5 421.0C611.5 422.8 619.2 425.4 629.1 426.6C639.1 427.9 651.9 428.0 663.4 428.5C674.9 429.0 687.0 429.4 697.9 429.6C708.8 429.8 717.8 429.9 728.9 429.6C740.1 429.4 754.5 428.5 764.9 428.0C775.4 427.5 782.7 427.5 791.6 426.4C800.4 425.2 810.3 422.4 818.0 421.2C825.8 419.9 832.1 419.9 838.1 418.9C844.1 417.9 851.3 415.8 853.9 415.1" stroke="#6f696b" stroke-width="2.0" opacity="0.33"/>
<path d="M578.8 415.7C582.9 416.8 595.3 420.5 603.6 422.4C611.8 424.2 618.4 425.5 628.3 426.8C638.2 428.1 651.8 429.6 663.0 430.3C674.1 431.0 683.8 431.3 695.2 431.2C706.6 431.0 720.2 430.2 731.4 429.6C742.6 428.9 752.2 427.8 762.4 427.3C772.6 426.7 783.5 427.4 792.7 426.2C802.0 425.0 810.4 421.5 817.8 420.1C825.1 418.6 831.2 418.5 837.1 417.4C843.0 416.3 850.4 414.0 853.1 413.4" stroke="#6f696b" stroke-width="2.0" opacity="0.31"/>
<path d="M581.7 415.3C585.0 416.6 593.8 421.3 601.6 423.2C609.3 425.0 617.7 425.3 628.1 426.6C638.4 427.9 652.2 430.3 663.7 431.1C675.3 431.8 686.5 431.1 697.3 431.1C708.2 431.1 718.1 431.7 728.9 431.0C739.7 430.3 751.6 428.2 762.1 426.9C772.5 425.7 782.2 424.1 791.6 423.3C801.0 422.6 810.8 423.2 818.6 422.3C826.5 421.5 832.9 419.3 838.7 418.0C844.5 416.7 851.0 415.1 853.5 414.5" stroke="#6f696b" stroke-width="1.8" opacity="0.36"/>
<path d="M579.7 415.4C583.8 416.3 596.1 419.2 604.5 421.2C612.8 423.3 620.2 426.6 629.8 427.9C639.3 429.2 650.5 428.2 661.7 429.0C673.0 429.8 685.8 432.3 697.3 432.7C708.8 433.0 719.7 431.9 731.0 431.2C742.2 430.5 754.5 429.7 764.8 428.6C775.0 427.6 783.6 426.0 792.5 424.8C801.4 423.7 811.0 422.9 818.3 421.8C825.7 420.6 830.6 418.8 836.6 417.7C842.5 416.6 851.1 415.8 854.0 415.4" stroke="#6f696b" stroke-width="2.2" opacity="0.32"/>
<path d="M579.7 414.3C583.7 415.5 595.0 418.8 603.4 421.2C611.8 423.5 620.6 427.0 630.1 428.5C639.7 430.1 649.6 430.2 660.9 430.6C672.1 430.9 686.0 430.6 697.5 430.9C709.0 431.2 719.2 432.7 730.0 432.2C740.7 431.8 751.7 429.2 761.8 428.2C772.0 427.1 781.0 427.1 790.8 426.0C800.6 424.9 813.0 422.7 820.6 421.4C828.2 420.1 831.1 419.3 836.6 418.3C842.0 417.3 850.4 415.9 853.1 415.4" stroke="#6f696b" stroke-width="2.1" opacity="0.37"/>
<path d="M581.2 414.6C584.8 416.0 594.8 420.9 602.7 423.1C610.6 425.3 618.6 426.4 628.5 427.7C638.3 429.0 650.5 430.0 661.6 430.9C672.7 431.8 683.8 433.4 695.1 433.0C706.5 432.7 718.2 429.8 729.5 428.9C740.7 428.0 752.6 428.3 762.7 427.6C772.8 426.9 780.9 425.6 790.2 424.7C799.6 423.8 810.8 423.3 818.7 422.0C826.6 420.8 831.9 418.2 837.5 417.2C843.0 416.1 849.6 415.8 852.0 415.5" stroke="#6f696b" stroke-width="2.5" opacity="0.35"/>
<path d="M579.0 415.6C582.9 416.4 594.4 418.4 602.6 420.5C610.8 422.5 618.1 426.3 628.2 428.0C638.2 429.7 651.7 429.9 663.1 430.5C674.5 431.1 685.4 431.2 696.4 431.5C707.4 431.8 717.9 432.7 729.0 432.2C740.1 431.7 752.3 429.5 763.0 428.5C773.7 427.5 783.8 427.5 793.1 426.1C802.5 424.8 811.4 422.1 818.9 420.6C826.4 419.0 832.3 417.7 838.2 416.7C844.1 415.6 851.5 414.5 854.2 414.1" stroke="#6f696b" stroke-width="2.4" opacity="0.32"/>
<path d="M579.6 413.6C583.4 414.7 594.7 418.0 602.7 420.4C610.8 422.7 618.0 426.3 627.7 427.8C637.5 429.3 649.9 428.5 661.2 429.1C672.6 429.7 684.4 430.9 695.8 431.2C707.2 431.5 718.4 431.6 729.7 431.0C741.1 430.4 753.4 428.3 764.1 427.5C774.7 426.7 784.7 427.1 793.5 426.3C802.4 425.4 809.8 423.7 817.4 422.5C825.1 421.3 833.7 420.1 839.5 419.0C845.2 417.9 849.7 416.3 851.7 415.8" stroke="#6f696b" stroke-width="2.2" opacity="0.29"/>
<path d="M581.0 433.8C583.6 436.7 591.4 445.5 596.6 451.0C601.8 456.5 606.4 461.8 612.1 466.8C617.8 471.8 624.4 477.7 630.9 481.1C637.4 484.5 643.6 484.8 651.1 486.9C658.5 489.0 668.3 492.2 675.6 493.7C682.9 495.1 687.8 495.6 695.1 495.6C702.4 495.6 711.7 494.4 719.4 493.6C727.2 492.9 734.1 492.5 741.7 491.0C749.3 489.4 758.0 486.9 765.2 484.4C772.3 481.8 778.3 478.8 784.6 475.8C790.9 472.7 797.4 469.6 803.1 466.0C808.9 462.4 814.2 458.9 819.1 454.1C823.9 449.3 828.6 442.3 832.2 437.1C835.9 431.8 839.5 425.0 840.9 422.6" stroke="#6f696b" stroke-width="2.1" opacity="0.30"/>
<path d="M582.9 430.6C585.1 434.1 590.8 445.5 596.0 452.0C601.1 458.5 608.2 464.8 613.9 469.7C619.5 474.5 623.7 478.2 630.0 481.4C636.3 484.5 644.1 486.5 651.6 488.6C659.0 490.6 667.3 493.0 674.7 493.9C682.0 494.7 688.2 494.2 695.9 493.7C703.6 493.2 713.2 491.4 720.8 490.8C728.5 490.2 734.7 491.2 741.5 489.9C748.4 488.7 754.6 485.6 762.1 483.4C769.6 481.2 779.8 479.5 786.5 476.7C793.2 474.0 796.9 471.0 802.3 466.9C807.8 462.9 814.1 457.7 819.3 452.5C824.6 447.4 829.7 440.8 833.6 436.1C837.5 431.5 841.3 426.4 842.9 424.5" stroke="#6f696b" stroke-width="2.0" opacity="0.40"/>
<path d="M582.5 431.9C584.7 435.4 591.1 447.1 596.1 453.1C601.1 459.1 606.6 463.4 612.5 467.9C618.5 472.5 624.9 477.0 631.7 480.2C638.4 483.5 645.7 485.5 653.0 487.5C660.3 489.5 668.1 491.2 675.3 492.1C682.5 493.1 689.1 492.7 696.4 493.1C703.7 493.5 711.5 494.8 719.0 494.4C726.6 494.0 734.2 492.6 741.6 490.6C749.0 488.5 756.1 484.8 763.3 482.3C770.6 479.7 778.3 478.0 785.0 475.3C791.7 472.7 798.1 469.8 803.5 466.1C808.9 462.5 812.5 458.1 817.5 453.5C822.5 448.8 829.8 443.2 833.5 438.2C837.3 433.1 839.1 425.7 840.2 423.2" stroke="#6f696b" stroke-width="1.7" opacity="0.31"/>
<path d="M584.7 432.4C586.7 435.9 591.5 447.1 596.6 453.2C601.7 459.2 609.4 464.1 615.3 468.6C621.3 473.2 626.3 477.2 632.5 480.5C638.7 483.8 645.4 486.9 652.5 488.7C659.5 490.5 667.3 490.5 674.7 491.4C682.2 492.2 689.5 493.9 697.1 493.8C704.6 493.8 712.9 492.0 720.1 490.9C727.2 489.9 732.2 488.6 739.7 487.5C747.2 486.5 757.3 486.8 765.1 484.7C772.9 482.5 779.9 477.6 786.4 474.5C793.0 471.4 798.8 470.0 804.3 466.1C809.8 462.3 815.1 456.4 819.5 451.6C824.0 446.9 827.6 442.3 831.2 437.7C834.8 433.0 839.6 426.1 841.3 423.7" stroke="#6f696b" stroke-width="2.2" opacity="0.41"/>
<path d="M581.2 432.3C583.4 435.3 588.5 444.4 594.2 450.5C599.8 456.5 608.4 463.6 614.9 468.5C621.5 473.4 627.9 476.6 633.7 479.8C639.5 483.0 643.0 485.4 649.8 487.8C656.5 490.3 666.3 493.2 674.4 494.3C682.5 495.3 690.9 494.5 698.3 493.9C705.7 493.3 711.4 491.9 718.6 490.9C725.9 490.0 734.3 489.9 741.6 488.2C748.9 486.6 755.6 483.1 762.6 481.1C769.6 479.0 777.3 478.1 783.8 475.7C790.3 473.4 795.8 470.5 801.5 466.9C807.1 463.3 812.8 459.2 817.7 454.1C822.5 448.9 826.3 441.3 830.5 436.1C834.7 430.9 840.8 425.2 842.9 423.0" stroke="#6f696b" stroke-width="2.3" opacity="0.31"/>
<path d="M581.2 433.1C583.8 436.5 591.3 447.8 596.9 453.4C602.4 459.0 608.7 462.0 614.6 466.5C620.6 471.1 626.4 476.9 632.5 480.8C638.7 484.8 644.8 487.8 651.5 490.0C658.3 492.3 665.4 494.0 673.0 494.4C680.6 494.7 689.9 492.3 697.3 492.0C704.6 491.8 709.6 493.8 717.1 493.1C724.6 492.4 734.6 489.2 742.3 487.7C750.0 486.2 756.2 485.8 763.2 483.9C770.3 482.0 777.8 479.9 784.5 476.4C791.1 473.0 797.2 467.2 802.9 463.2C808.7 459.3 814.0 457.0 818.8 452.9C823.6 448.8 828.1 443.3 831.8 438.7C835.4 434.1 839.1 427.4 840.6 425.2" stroke="#6f696b" stroke-width="2.0" opacity="0.37"/>
<path d="M583.5 431.7C585.5 435.3 590.2 446.9 595.5 453.1C600.9 459.4 609.4 465.0 615.5 469.3C621.6 473.7 626.5 475.7 632.3 479.2C638.0 482.6 642.9 487.8 649.9 490.2C657.0 492.6 667.2 493.1 674.8 493.8C682.4 494.5 688.0 494.4 695.7 494.4C703.4 494.4 713.3 494.8 720.9 493.8C728.5 492.9 734.3 490.2 741.4 488.6C748.5 487.1 756.4 486.7 763.7 484.6C771.0 482.4 778.7 478.7 785.3 475.7C791.9 472.7 797.5 470.6 803.4 466.6C809.3 462.6 816.1 456.7 820.5 451.7C825.0 446.8 826.5 441.6 830.0 437.1C833.5 432.5 839.7 426.5 841.7 424.3" stroke="#6f696b" stroke-width="2.4" opacity="0.40"/>
<path d="M581.2 433.3C583.8 436.7 591.8 447.8 597.2 453.5C602.7 459.1 608.0 462.7 614.0 467.3C620.0 471.9 627.0 477.5 633.4 481.2C639.8 485.0 645.8 488.4 652.4 490.0C659.1 491.6 666.0 490.0 673.4 490.8C680.8 491.7 689.2 494.7 696.6 495.2C704.0 495.6 710.1 494.6 717.8 493.5C725.5 492.4 735.0 490.0 742.7 488.3C750.5 486.7 757.3 486.1 764.4 483.7C771.6 481.3 779.4 476.8 785.7 473.8C791.9 470.9 796.2 469.6 802.0 466.0C807.8 462.4 815.7 456.9 820.5 452.4C825.2 448.0 826.6 444.1 830.4 439.2C834.1 434.3 841.0 425.6 843.1 422.9" stroke="#6f696b" stroke-width="2.2" opacity="0.40"/>
<path d="M584.5 432.1C586.4 435.5 591.3 446.5 595.9 452.4C600.6 458.2 606.7 462.2 612.5 467.0C618.3 471.7 624.3 477.2 630.7 480.8C637.2 484.4 644.0 486.6 651.2 488.6C658.3 490.5 666.3 492.0 673.6 492.6C680.9 493.2 687.1 492.3 695.0 492.2C702.9 492.1 713.6 492.4 721.0 492.0C728.4 491.6 732.1 491.7 739.4 489.9C746.8 488.2 757.4 484.2 765.1 481.6C772.9 479.0 779.9 477.5 786.2 474.4C792.5 471.3 797.9 466.4 803.1 463.1C808.3 459.8 812.4 458.8 817.4 454.6C822.5 450.4 829.3 443.2 833.5 437.9C837.6 432.7 840.8 425.5 842.3 423.0" stroke="#6f696b" stroke-width="2.3" opacity="0.34"/>
<path d="M597.8 461.1C600.7 463.9 609.4 473.9 615.0 478.1C620.5 482.2 625.1 483.3 631.0 486.2C636.9 489.0 643.6 492.9 650.5 495.0C657.4 497.1 664.6 497.3 672.3 498.7C680.0 500.1 688.9 502.9 696.6 503.5C704.4 504.1 711.2 503.6 718.8 502.3C726.5 501.0 735.0 497.6 742.6 495.7C750.2 493.7 757.5 492.4 764.4 490.6C771.3 488.8 778.0 487.7 784.3 484.8C790.6 481.9 796.1 477.0 802.0 473.3C808.0 469.5 814.8 467.0 819.9 462.4C825.0 457.8 830.5 448.4 832.7 445.6" stroke="#5c5657" stroke-width="1.1" opacity="0.30"/>
<path d="M597.9 462.0C600.3 464.0 607.1 470.1 612.6 474.4C618.1 478.6 624.2 483.5 631.0 487.4C637.8 491.3 645.9 496.0 653.3 497.9C660.7 499.8 668.0 497.9 675.3 498.7C682.7 499.5 690.2 502.2 697.5 502.8C704.9 503.5 712.6 503.6 719.6 502.4C726.5 501.3 731.7 497.6 739.2 496.0C746.8 494.4 757.1 495.1 765.0 492.8C772.9 490.5 780.1 485.3 786.5 482.2C792.9 479.1 798.2 477.7 803.4 474.0C808.6 470.3 813.1 464.8 817.7 459.9C822.3 455.0 828.8 447.1 831.0 444.5" stroke="#5c5657" stroke-width="1.1" opacity="0.30"/>
<path d="M595.0 458.6C598.2 461.2 608.1 469.5 614.4 474.3C620.7 479.0 627.0 482.8 632.9 486.8C638.8 490.7 643.2 495.4 649.8 498.0C656.5 500.6 664.9 501.3 672.9 502.2C680.9 503.2 690.4 503.9 697.9 503.6C705.3 503.2 710.6 501.0 717.6 500.3C724.5 499.5 731.4 500.6 739.4 499.1C747.4 497.7 757.7 494.3 765.4 491.5C773.1 488.7 779.1 485.5 785.6 482.4C792.1 479.3 798.6 476.8 804.3 472.9C810.0 469.0 815.4 464.0 819.8 459.2C824.2 454.4 829.0 446.7 830.9 444.2" stroke="#5c5657" stroke-width="1.2" opacity="0.35"/>
<path d="M605.1 451.9C608.4 453.0 617.1 456.9 624.4 458.8C631.8 460.7 640.8 462.3 649.2 463.5C657.6 464.6 665.1 465.4 674.8 465.6C684.5 465.8 696.2 465.0 707.2 464.5C718.2 464.0 731.1 463.4 740.6 462.5C750.0 461.5 756.7 460.1 764.1 458.6C771.4 457.2 777.8 455.9 784.7 453.5C791.6 451.2 799.2 447.3 805.4 444.3C811.6 441.3 819.2 437.0 821.9 435.5" stroke="#5c5657" stroke-width="1.1" opacity="0.39"/>
<path d="M605.7 452.2C609.1 453.5 619.0 458.1 626.2 460.0C633.4 461.9 640.9 462.7 649.0 463.5C657.2 464.3 665.0 464.9 675.0 464.9C684.9 465.0 697.3 464.8 708.5 464.0C719.7 463.2 732.6 461.5 742.1 460.3C751.7 459.2 758.6 458.6 765.7 457.1C772.9 455.6 778.3 453.4 784.9 451.4C791.6 449.4 799.7 447.7 805.8 445.1C811.8 442.5 818.7 437.4 821.2 435.8" stroke="#5c5657" stroke-width="1.4" opacity="0.39"/>
<path d="M606.2 450.1C609.2 451.7 616.8 457.5 624.2 459.6C631.6 461.8 642.4 462.4 650.5 463.3C658.6 464.2 663.4 464.8 673.0 465.0C682.6 465.2 697.0 465.2 708.3 464.5C719.5 463.8 731.0 461.9 740.5 460.8C750.0 459.7 757.6 459.3 765.3 458.0C773.0 456.7 780.0 455.1 786.5 452.8C793.1 450.5 798.3 446.8 804.3 444.0C810.3 441.1 819.5 437.1 822.6 435.8" stroke="#5c5657" stroke-width="1.3" opacity="0.37"/>
<path d="M606.7 454.6C609.9 456.1 618.6 461.8 625.8 463.9C633.0 465.9 641.8 465.8 650.0 466.8C658.2 467.8 665.2 469.8 675.0 469.9C684.8 470.1 698.0 468.5 708.9 467.9C719.8 467.3 730.9 467.5 740.2 466.3C749.5 465.1 757.1 462.3 764.7 460.7C772.2 459.1 779.0 458.8 785.5 456.8C792.0 454.9 797.7 451.8 803.8 449.0C809.9 446.2 818.9 441.5 821.9 440.0" stroke="#5c5657" stroke-width="0.8" opacity="0.37"/>
<path d="M606.8 455.9C609.7 457.1 617.4 461.4 624.6 463.5C631.7 465.6 641.7 467.4 649.7 468.6C657.8 469.8 663.1 470.9 672.9 470.9C682.8 470.9 697.7 469.4 709.1 468.5C720.4 467.6 731.7 466.9 741.0 465.6C750.4 464.2 757.4 462.0 765.1 460.3C772.7 458.7 780.4 458.0 786.9 455.9C793.4 453.9 798.5 450.6 804.2 448.0C810.0 445.5 818.5 442.0 821.4 440.8" stroke="#5c5657" stroke-width="0.8" opacity="0.29"/>
<path d="M616.6 429.1L615.4 454.1" stroke="#7a7476" stroke-width="1.2" opacity="0.50"/>
<path d="M616.3 429.1L616.6 456.6" stroke="#7a7476" stroke-width="1.2" opacity="0.50"/>
<path d="M643.4 429.9L641.8 460.2" stroke="#7a7476" stroke-width="1.2" opacity="0.50"/>
<path d="M643.5 429.9L641.6 456.5" stroke="#7a7476" stroke-width="1.2" opacity="0.50"/>
<path d="M671.8 430.7L671.8 458.6" stroke="#7a7476" stroke-width="1.2" opacity="0.50"/>
<path d="M670.7 430.7L670.3 457.9" stroke="#7a7476" stroke-width="1.2" opacity="0.50"/>
<path d="M701.2 431.6L702.6 458.7" stroke="#7a7476" stroke-width="1.2" opacity="0.50"/>
<path d="M701.1 431.6L702.1 458.7" stroke="#7a7476" stroke-width="1.2" opacity="0.50"/>
<path d="M733.0 431.5L734.7 459.8" stroke="#7a7476" stroke-width="1.2" opacity="0.50"/>
<path d="M731.8 431.5L733.1 460.5" stroke="#7a7476" stroke-width="1.2" opacity="0.50"/>
<path d="M763.1 430.6L764.9 457.8" stroke="#7a7476" stroke-width="1.2" opacity="0.50"/>
<path d="M762.9 430.6L761.9 455.5" stroke="#7a7476" stroke-width="1.2" opacity="0.50"/>
<path d="M787.8 429.8L789.7 453.0" stroke="#7a7476" stroke-width="1.2" opacity="0.50"/>
<path d="M789.2 429.8L790.5 453.2" stroke="#7a7476" stroke-width="1.2" opacity="0.50"/>
<path d="M806.7 429.2L806.7 449.5" stroke="#7a7476" stroke-width="1.2" opacity="0.50"/>
<path d="M809.3 429.2L808.3 446.8" stroke="#7a7476" stroke-width="1.2" opacity="0.50"/>
<path d="M642.0 463.8L641.6 482.9" stroke="#807a7c" stroke-width="1.1" opacity="0.45"/>
<path d="M641.8 463.8L640.5 482.9" stroke="#807a7c" stroke-width="1.1" opacity="0.45"/>
<path d="M664.9 465.0L664.9 487.2" stroke="#807a7c" stroke-width="1.1" opacity="0.45"/>
<path d="M664.0 465.0L663.0 487.2" stroke="#807a7c" stroke-width="1.1" opacity="0.45"/>
<path d="M694.9 465.8L695.8 490.3" stroke="#807a7c" stroke-width="1.1" opacity="0.45"/>
<path d="M694.9 465.8L695.3 490.3" stroke="#807a7c" stroke-width="1.1" opacity="0.45"/>
<path d="M719.3 466.0L720.5 491.0" stroke="#807a7c" stroke-width="1.1" opacity="0.45"/>
<path d="M719.5 466.0L718.1 491.0" stroke="#807a7c" stroke-width="1.1" opacity="0.45"/>
<path d="M754.8 463.5L754.1 488.6" stroke="#807a7c" stroke-width="1.1" opacity="0.45"/>
<path d="M754.9 463.5L754.2 488.6" stroke="#807a7c" stroke-width="1.1" opacity="0.45"/>
<path d="M776.9 459.3L778.2 485.2" stroke="#807a7c" stroke-width="1.1" opacity="0.45"/>
<path d="M777.0 459.3L776.3 485.2" stroke="#807a7c" stroke-width="1.1" opacity="0.45"/>
<path d="M799.0 454.7L798.8 480.4" stroke="#807a7c" stroke-width="1.1" opacity="0.45"/>
<path d="M799.9 454.7L799.3 480.4" stroke="#807a7c" stroke-width="1.1" opacity="0.45"/>
<path d="M676.8 505.3L745.7 500.7" stroke="#5f595b" stroke-width="1.6" opacity="0.50"/>
<path d="M680.7 505.0L746.6 500.4" stroke="#5f595b" stroke-width="1.6" opacity="0.50"/>
<path d="M678.2 504.3L745.7 499.8" stroke="#5f595b" stroke-width="1.6" opacity="0.50"/>
<path d="M639.0 511.5C645.6 512.9 667.4 517.8 678.9 519.7C690.4 521.7 695.8 523.6 707.9 523.2C720.1 522.9 738.0 521.6 751.7 517.5C765.4 513.5 783.9 501.9 790.4 498.8" stroke="#5c5657" stroke-width="1.0" opacity="0.31"/>
<path d="M639.8 512.2C646.6 513.7 669.0 519.3 680.6 520.8C692.1 522.4 697.7 522.3 709.1 521.7C720.4 521.1 735.2 520.9 748.6 517.1C762.0 513.2 782.6 501.5 789.4 498.4" stroke="#5c5657" stroke-width="0.9" opacity="0.28"/>
<path d="M641.8 510.7C648.2 512.4 669.1 518.5 680.3 521.0C691.5 523.4 697.5 525.9 708.9 525.4C720.4 525.0 735.7 523.3 749.0 518.4C762.2 513.4 781.7 499.6 788.3 495.8" stroke="#5c5657" stroke-width="1.3" opacity="0.29"/>
<path d="M637.8 511.4C644.8 513.2 668.0 520.5 679.7 522.2C691.4 523.9 695.9 522.3 708.0 521.6C720.1 521.0 738.9 522.3 752.3 518.2C765.7 514.1 782.3 500.7 788.3 497.2" stroke="#5c5657" stroke-width="1.0" opacity="0.31"/>
<path d="M578.0 513.8C580.0 513.7 589.2 513.7 590.5 513.0C591.8 512.3 586.3 510.0 585.7 509.9C585.2 509.8 586.5 512.1 587.0 512.2C587.5 512.3 587.9 509.3 588.8 510.5C589.6 511.7 591.8 518.0 592.1 519.4C592.4 520.7 591.2 519.7 590.4 518.3C589.6 517.0 590.1 510.4 587.4 511.3C584.8 512.2 575.7 522.6 574.3 523.8C572.8 525.1 576.4 521.3 578.9 518.8C581.3 516.4 588.7 509.4 588.9 509.1C589.1 508.7 581.9 514.0 580.1 517.0C578.3 520.0 577.3 527.4 578.1 526.9C579.0 526.4 585.0 513.2 585.2 514.0C585.4 514.7 580.0 528.5 579.2 531.3C578.4 534.0 579.0 533.9 580.6 530.3C582.3 526.6 589.6 510.4 589.1 509.3C588.7 508.2 577.7 519.7 577.8 523.6C577.9 527.5 587.2 531.0 589.6 532.6C592.0 534.3 593.8 535.4 592.4 533.3C591.0 531.1 580.9 522.1 581.1 519.7C581.2 517.3 591.4 520.1 593.4 518.8C595.3 517.4 592.8 511.0 592.8 511.5C592.8 511.9 596.1 518.1 593.3 521.3C590.5 524.4 576.0 529.9 575.9 530.4C575.7 530.9 592.0 526.0 592.4 524.1C592.8 522.2 577.6 520.2 578.2 519.0C578.8 517.8 596.7 516.7 596.1 516.9C595.5 517.0 577.5 518.9 574.4 519.8C571.3 520.7 576.9 521.9 577.4 522.3" stroke="#6a6466" stroke-width="1.3" opacity="0.45"/>
<path d="M583.2 513.8C582.7 517.1 581.1 529.6 580.4 533.3C579.8 537.0 579.0 539.5 579.3 536.1C579.6 532.7 580.1 514.1 582.4 513.0C584.7 512.0 593.8 526.8 593.2 529.7C592.6 532.7 581.6 532.8 578.8 530.7C575.9 528.5 573.3 518.5 576.1 516.9C578.8 515.3 595.0 519.2 595.2 521.1C595.4 523.0 577.4 527.9 577.3 528.3C577.1 528.6 594.8 524.6 594.5 523.4C594.2 522.1 576.2 519.4 575.5 520.9C574.8 522.4 586.5 532.3 590.2 532.4C593.9 532.5 599.4 523.2 597.7 521.6C596.0 520.1 580.6 524.0 580.1 523.0C579.6 521.9 592.7 517.7 594.7 515.4C596.6 513.1 592.1 509.0 591.8 509.2C591.6 509.4 593.2 512.8 593.0 516.6C592.8 520.3 593.3 530.7 590.7 531.7C588.1 532.7 577.7 522.7 577.4 522.8C577.2 522.8 588.7 533.1 589.1 531.7C589.5 530.4 581.5 513.7 579.8 514.5C578.1 515.2 578.5 535.7 579.0 536.3C579.4 536.9 582.9 518.7 582.6 517.9C582.3 517.0 577.1 528.0 577.1 531.1C577.2 534.1 580.0 537.2 582.9 536.0C585.7 534.8 592.7 527.6 594.2 523.8C595.7 520.0 593.6 514.6 591.8 513.3C589.9 511.9 585.5 514.1 583.1 515.8C580.6 517.6 576.7 520.3 577.1 523.8C577.5 527.2 584.1 534.3 585.5 536.4" stroke="#6a6466" stroke-width="1.3" opacity="0.45"/>
<path d="M574.3 520.5C575.0 520.2 576.1 517.2 579.0 518.7C581.8 520.2 590.0 530.1 591.3 529.5C592.7 529.0 586.8 515.6 586.9 515.5C587.0 515.3 593.9 527.7 592.0 528.7C590.1 529.7 577.7 524.0 575.3 521.6C573.0 519.2 575.3 513.5 578.0 514.3C580.8 515.1 590.2 526.5 591.8 526.4C593.4 526.3 588.7 515.8 587.5 513.6C586.3 511.5 584.3 510.5 584.8 513.5C585.2 516.6 588.2 528.8 590.1 531.9C592.0 535.1 597.9 534.7 596.1 532.5C594.3 530.2 582.4 519.5 579.5 518.5C576.6 517.6 575.6 525.2 578.6 526.9C581.6 528.6 598.0 530.5 597.6 528.7C597.1 526.8 579.3 515.9 575.9 515.8C572.5 515.8 575.5 525.7 577.3 528.3C579.1 530.8 583.3 533.0 586.5 531.2C589.8 529.4 597.7 516.4 596.9 517.4C596.1 518.4 583.0 537.9 581.8 537.5C580.6 537.0 590.5 518.4 589.6 514.6C588.8 510.7 579.3 512.6 576.7 514.2C574.2 515.8 572.7 520.7 574.4 524.0C576.0 527.4 585.1 535.8 586.9 534.2C588.7 532.7 585.9 514.1 585.1 514.6C584.3 515.2 583.9 535.8 582.3 537.5C580.7 539.2 574.7 525.8 575.5 525.0C576.2 524.1 585.7 531.4 586.8 532.3C587.9 533.2 580.9 532.2 582.2 530.5C583.4 528.7 592.0 523.3 594.0 521.9" stroke="#6a6466" stroke-width="1.3" opacity="0.45"/>
<path d="M597.4 525.0C597.0 527.1 596.1 529.2 595.1 531.0C594.0 532.7 592.6 534.3 591.1 535.3C589.6 536.3 587.8 537.0 586.2 537.2C584.6 537.3 582.8 537.0 581.4 536.2C580.0 535.4 578.6 534.1 577.6 532.6C576.7 531.0 576.0 529.0 575.7 527.0C575.4 525.0 575.4 522.7 575.8 520.6C576.3 518.6 577.1 516.4 578.2 514.7C579.2 513.0 580.7 511.4 582.2 510.4C583.6 509.3 585.4 508.6 587.0 508.5C588.6 508.3 590.4 508.7 591.8 509.5C593.3 510.2 594.6 511.6 595.6 513.1C596.6 514.6 597.3 516.6 597.6 518.6C597.9 520.6 597.8 523.0 597.4 525.0Z" stroke="#6a6466" stroke-width="1.4" opacity="0.42"/>
<path d="M598.3 525.8C597.9 528.0 597.0 530.3 595.8 532.1C594.7 533.9 593.1 535.6 591.5 536.7C589.9 537.8 587.9 538.6 586.2 538.7C584.4 538.9 582.5 538.5 580.9 537.7C579.4 536.8 577.9 535.4 576.8 533.8C575.8 532.1 575.0 529.9 574.6 527.8C574.3 525.7 574.4 523.2 574.8 521.0C575.3 518.8 576.2 516.5 577.3 514.6C578.4 512.8 580.0 511.1 581.6 510.0C583.2 508.9 585.2 508.2 587.0 508.0C588.7 507.9 590.6 508.3 592.2 509.1C593.7 509.9 595.3 511.3 596.3 513.0C597.4 514.6 598.2 516.8 598.5 518.9C598.8 521.1 598.8 523.6 598.3 525.8Z" stroke="#6a6466" stroke-width="1.4" opacity="0.42"/>
<path d="M599.0 525.3C598.6 527.7 597.6 530.1 596.4 532.1C595.1 534.0 593.4 535.8 591.7 537.0C590.0 538.2 587.8 538.9 585.9 539.1C584.0 539.2 582.0 538.8 580.3 537.9C578.6 537.0 576.9 535.5 575.8 533.8C574.7 532.0 573.8 529.7 573.4 527.4C573.0 525.2 573.1 522.5 573.6 520.1C574.0 517.8 575.0 515.3 576.2 513.4C577.5 511.4 579.2 509.6 580.9 508.5C582.7 507.3 584.8 506.5 586.7 506.4C588.6 506.2 590.6 506.7 592.3 507.5C594.0 508.4 595.7 509.9 596.8 511.7C598.0 513.4 598.8 515.8 599.2 518.0C599.6 520.3 599.5 523.0 599.0 525.3Z" stroke="#6a6466" stroke-width="1.4" opacity="0.42"/>
<path d="M836.1 543.2C834.3 542.9 826.0 541.3 825.2 541.1C824.4 541.0 830.7 542.4 831.4 542.3C832.1 542.3 830.4 543.5 829.4 541.1C828.4 538.7 824.6 527.4 825.4 527.9C826.2 528.4 832.6 542.1 834.1 544.0C835.7 545.9 834.9 541.8 834.5 539.3C834.1 536.8 834.4 529.2 831.9 529.2C829.4 529.2 819.8 539.3 819.6 539.1C819.5 539.0 830.4 527.6 831.0 528.4C831.6 529.2 825.0 541.2 823.4 543.8C821.8 546.4 819.9 543.3 821.3 543.9C822.7 544.4 831.6 548.7 831.8 547.2C832.0 545.7 824.1 536.5 822.7 534.8C821.3 533.1 822.7 538.2 823.5 537.0C824.3 535.8 825.2 528.9 827.2 527.6C829.3 526.3 836.3 526.9 835.9 529.1C835.4 531.2 826.6 540.4 824.7 540.6C822.7 540.8 822.8 532.1 824.2 530.4C825.5 528.6 833.5 529.5 833.0 530.2C832.4 530.8 821.7 531.5 820.8 534.2C819.9 536.9 827.5 545.0 827.8 546.3C828.0 547.6 823.1 544.4 822.3 542.0C821.5 539.6 822.4 532.1 822.8 531.7C823.2 531.2 823.0 536.8 824.8 539.1C826.6 541.5 833.4 544.8 833.5 545.7C833.5 546.6 824.8 545.3 825.1 544.6C825.5 543.8 835.7 541.6 835.5 541.2C835.3 540.8 825.2 542.2 823.9 542.2C822.5 542.2 826.8 541.2 827.4 541.0" stroke="#7a7476" stroke-width="1.1" opacity="0.40"/>
<path d="M826.6 541.9C828.1 542.1 835.4 542.5 835.5 542.8C835.7 543.1 827.2 545.9 827.5 543.6C827.8 541.2 835.6 531.6 837.1 528.8C838.6 526.1 837.1 524.9 836.5 526.9C835.9 528.9 833.2 539.1 833.5 540.8C833.7 542.5 839.3 539.1 837.9 537.0C836.6 534.8 828.1 527.2 825.3 527.8C822.6 528.4 821.1 540.5 821.4 540.5C821.6 540.5 825.0 529.8 827.0 527.8C828.9 525.7 833.4 527.8 833.0 528.1C832.7 528.5 824.2 527.3 824.8 529.8C825.5 532.3 836.3 544.2 836.8 543.2C837.4 542.2 828.5 525.2 828.1 524.1C827.6 523.0 833.3 533.7 834.0 536.5C834.7 539.4 833.5 540.1 832.2 541.2C831.0 542.3 826.1 543.8 826.6 543.1C827.2 542.4 835.9 539.2 835.6 537.0C835.4 534.7 825.5 531.3 825.1 529.6C824.7 527.8 833.1 526.9 833.5 526.6C833.9 526.3 829.8 525.4 827.6 527.5C825.5 529.6 820.9 537.2 820.7 539.3C820.4 541.3 823.9 542.1 826.1 539.8C828.3 537.4 833.6 525.0 833.9 525.2C834.2 525.4 827.8 540.7 827.8 541.0C827.9 541.3 833.0 527.5 834.2 526.9C835.5 526.3 834.8 534.6 835.1 537.2C835.5 539.8 837.0 540.8 836.5 542.4C835.9 544.0 832.8 549.3 831.6 547.0C830.4 544.7 829.4 531.6 829.0 528.5" stroke="#7a7476" stroke-width="1.1" opacity="0.40"/>
<path d="M839.2 532.8C839.5 534.5 839.6 536.4 839.3 538.1C838.9 539.8 838.3 541.5 837.4 542.7C836.5 544.0 835.2 545.2 833.9 545.8C832.6 546.5 831.0 546.8 829.5 546.7C828.1 546.6 826.5 546.1 825.1 545.2C823.8 544.4 822.5 543.1 821.6 541.7C820.7 540.3 819.9 538.5 819.6 536.8C819.2 535.1 819.2 533.1 819.5 531.5C819.8 529.8 820.5 528.1 821.4 526.8C822.3 525.5 823.6 524.4 824.9 523.8C826.2 523.1 827.8 522.8 829.2 522.9C830.7 523.0 832.3 523.5 833.6 524.4C835.0 525.2 836.3 526.5 837.2 527.9C838.1 529.3 838.8 531.1 839.2 532.8Z" stroke="#7a7476" stroke-width="1.2" opacity="0.35"/>
<path d="M840.3 533.5C840.6 535.3 840.7 537.4 840.3 539.2C840.0 541.0 839.2 542.9 838.2 544.3C837.2 545.7 835.8 546.9 834.4 547.6C833.0 548.3 831.2 548.7 829.6 548.6C828.0 548.5 826.2 547.9 824.8 547.0C823.3 546.1 821.9 544.7 820.9 543.2C819.9 541.6 819.1 539.7 818.7 537.8C818.3 536.0 818.3 533.9 818.7 532.1C819.0 530.3 819.8 528.5 820.8 527.1C821.7 525.7 823.1 524.4 824.6 523.7C826.0 523.0 827.8 522.6 829.4 522.7C831.0 522.9 832.7 523.4 834.2 524.3C835.6 525.2 837.1 526.6 838.1 528.2C839.1 529.7 839.9 531.6 840.3 533.5Z" stroke="#7a7476" stroke-width="1.2" opacity="0.35"/>
<path d="M577.7 511.5L545.1 511.5" stroke="#6a6466" stroke-width="1.6" opacity="0.50"/>
<path d="M581.6 515.1L544.7 512.4" stroke="#6a6466" stroke-width="1.6" opacity="0.50"/>
<path d="M579.8 513.7L543.3 512.1" stroke="#6a6466" stroke-width="1.6" opacity="0.50"/>
<path d="M578.6 514.1L553.1 492.8" stroke="#6a6466" stroke-width="1.6" opacity="0.50"/>
<path d="M580.6 511.3L552.6 494.1" stroke="#6a6466" stroke-width="1.6" opacity="0.50"/>
<path d="M577.6 514.3L553.1 493.8" stroke="#6a6466" stroke-width="1.6" opacity="0.50"/>
<path d="M579.3 512.5L560.4 481.3" stroke="#6a6466" stroke-width="1.6" opacity="0.50"/>
<path d="M578.5 512.2L560.9 480.9" stroke="#6a6466" stroke-width="1.6" opacity="0.50"/>
<path d="M580.2 515.0L560.8 481.1" stroke="#6a6466" stroke-width="1.6" opacity="0.50"/>
<path d="M579.1 513.7L576.9 480.2" stroke="#6a6466" stroke-width="1.6" opacity="0.50"/>
<path d="M577.8 516.3L575.3 480.6" stroke="#6a6466" stroke-width="1.6" opacity="0.50"/>
<path d="M578.0 515.9L576.1 481.0" stroke="#6a6466" stroke-width="1.6" opacity="0.50"/>
<path d="M577.0 515.0L560.9 532.6" stroke="#6a6466" stroke-width="1.6" opacity="0.50"/>
<path d="M580.6 516.0L559.9 532.3" stroke="#6a6466" stroke-width="1.6" opacity="0.50"/>
<path d="M578.2 512.2L559.8 532.3" stroke="#6a6466" stroke-width="1.6" opacity="0.50"/>
<path d="M832.2 531.2L843.2 498.4" stroke="#7a7476" stroke-width="1.4" opacity="0.45"/>
<path d="M832.9 529.8L843.0 498.5" stroke="#7a7476" stroke-width="1.4" opacity="0.45"/>
<path d="M831.4 527.1L856.2 514.5" stroke="#7a7476" stroke-width="1.4" opacity="0.45"/>
<path d="M831.5 531.3L856.2 514.1" stroke="#7a7476" stroke-width="1.4" opacity="0.45"/>
<path d="M831.7 529.9L863.6 523.6" stroke="#7a7476" stroke-width="1.4" opacity="0.45"/>
<path d="M834.3 527.0L864.5 524.5" stroke="#7a7476" stroke-width="1.4" opacity="0.45"/>
<path d="M834.8 532.6L862.9 540.2" stroke="#7a7476" stroke-width="1.4" opacity="0.45"/>
<path d="M832.5 527.8L861.7 541.2" stroke="#7a7476" stroke-width="1.4" opacity="0.45"/>
<path d="M836.0 528.8L848.4 508.3" stroke="#7a7476" stroke-width="1.4" opacity="0.45"/>
<path d="M836.1 532.6L848.3 508.6" stroke="#7a7476" stroke-width="1.4" opacity="0.45"/>
<path d="M598.0 530.5L616.5 548.4" stroke="#5f595b" stroke-width="2.0" opacity="0.50"/>
<path d="M598.0 529.6L616.6 549.1" stroke="#5f595b" stroke-width="2.0" opacity="0.50"/>
<path d="M596.6 530.7L616.2 548.1" stroke="#5f595b" stroke-width="2.0" opacity="0.50"/>
<path d="M597.2 530.3L618.0 549.4" stroke="#5f595b" stroke-width="2.0" opacity="0.50"/>
<path d="M822 540l-36 9.500h28l10-6z" fill="#6f696b" opacity=".55" stroke="none"/>
<path d="M666 530l7 3 5 8-2 9h-22z" fill="#6a6466" opacity=".62" stroke="none"/>
<path d="M741.8 529.9L748.0 549.0" stroke="#6f696b" stroke-width="1.8" opacity="0.45"/>
<path d="M743.0 528.3L750.6 549.0" stroke="#6f696b" stroke-width="1.8" opacity="0.45"/>
<path d="M745.2 528.2L754.4 549.0" stroke="#6f696b" stroke-width="1.8" opacity="0.45"/>
<path d="M746.3 528.9L757.9 549.0" stroke="#6f696b" stroke-width="1.8" opacity="0.45"/>
<path d="M640.6 192.0C641.6 193.2 645.1 196.5 646.9 199.3C648.6 202.1 650.3 205.0 651.0 208.9C651.6 212.8 651.1 218.5 650.7 222.8C650.4 227.0 649.9 229.7 648.8 234.3C647.8 238.9 645.5 245.2 644.5 250.4C643.5 255.5 643.0 261.1 642.7 265.3C642.4 269.6 642.2 272.7 642.6 275.9C643.1 279.0 644.2 281.0 645.4 284.2C646.6 287.5 648.4 290.9 649.9 295.3C651.4 299.6 653.8 307.9 654.6 310.4" stroke="#6a6466" stroke-width="1.5" opacity="0.45"/>
<path d="M641.6 192.7C642.4 193.7 644.9 196.2 646.3 199.1C647.7 202.0 649.3 205.9 650.1 209.9C650.9 213.9 651.2 218.6 651.0 222.9C650.9 227.2 649.8 231.0 649.0 235.5C648.2 240.1 647.0 245.4 646.0 250.3C645.1 255.1 643.8 260.2 643.4 264.5C642.9 268.9 643.2 273.1 643.4 276.2C643.6 279.4 643.5 280.4 644.6 283.7C645.7 286.9 648.2 291.6 650.0 296.0C651.8 300.4 654.4 307.7 655.3 310.1" stroke="#6a6466" stroke-width="1.5" opacity="0.45"/>
<path d="M641.2 193.8C642.0 194.8 644.3 196.6 646.0 199.3C647.6 202.0 650.4 206.0 650.9 209.9C651.4 213.7 649.6 218.2 649.1 222.4C648.6 226.5 648.6 230.1 647.9 234.7C647.2 239.3 645.7 245.0 644.8 250.1C644.0 255.2 643.3 261.1 642.8 265.3C642.4 269.5 641.6 272.2 642.2 275.3C642.7 278.4 644.9 280.0 645.9 283.6C646.9 287.2 646.7 292.5 648.1 296.8C649.6 301.1 653.4 307.5 654.5 309.6" stroke="#6a6466" stroke-width="1.5" opacity="0.45"/>
<path d="M641.6 192.5C642.5 193.7 645.6 197.2 647.0 200.1C648.4 203.1 649.5 206.5 649.9 210.2C650.3 213.8 649.4 218.1 649.1 222.0C648.9 225.9 649.1 229.1 648.4 233.6C647.7 238.1 645.8 243.6 644.8 249.1C643.8 254.5 642.8 261.7 642.6 266.3C642.3 270.9 642.6 273.7 643.1 276.5C643.6 279.2 644.4 279.3 645.6 282.7C646.7 286.0 648.7 291.7 650.1 296.5C651.5 301.2 653.5 308.8 654.1 311.2" stroke="#6a6466" stroke-width="1.5" opacity="0.45"/>
<path d="M648.2 234.5C647.7 237.1 645.9 244.8 645.0 250.0C644.1 255.2 643.0 261.2 642.7 265.5C642.4 269.8 642.6 273.0 643.0 276.0C643.4 279.0 644.0 280.2 645.0 283.5C646.0 286.8 647.3 291.5 649.0 296.0C650.7 300.5 654.0 308.1 655.0 310.5" stroke="#1e1b1c" stroke-width="2.4" opacity="0.90"/>
<path d="M641.5 193.0C642.4 194.2 645.5 197.2 647.0 200.0C648.5 202.8 650.0 206.3 650.5 210.0C651.0 213.7 650.4 217.9 650.0 222.0C649.6 226.1 649.0 229.8 648.2 234.5C647.4 239.2 645.5 247.4 645.0 250.0" stroke="#3a3637" stroke-width="1.6" opacity="0.60"/>
<path d="M731 298L768.900 241.500L776.700 264.500L790 249.500" stroke="#1a1718" stroke-width="2.5" opacity="0.95" stroke-linejoin="miter"/>
<path d="M787.8 251.3L808.9 227.8" stroke="#5a5556" stroke-width="1.6" opacity="0.55"/>
<path d="M788.5 251.3L808.6 226.8" stroke="#5a5556" stroke-width="1.6" opacity="0.55"/>
<path d="M787.5 251.7L807.0 227.9" stroke="#5a5556" stroke-width="1.6" opacity="0.55"/>
<path d="M729 299L767 243" stroke="#7a7476" stroke-width="1.0" opacity="0.50"/>
<path d="M722 300L735 294" stroke="#8a8486" stroke-width="1.0" opacity="0.40"/>
<path d="M631.5 167.3C634.3 167.9 636.3 170.8 638.0 173.0C639.7 175.2 640.7 177.5 641.5 180.7C642.3 183.8 643.0 188.7 642.7 191.9C642.5 195.1 641.1 197.8 640.0 200.0C638.9 202.2 637.8 203.9 636.0 205.3C634.2 206.7 631.2 207.8 629.0 208.5C626.8 209.2 624.9 210.1 622.6 209.8C620.3 209.5 617.0 207.8 615.0 206.5C613.0 205.2 611.5 204.2 610.3 202.0C609.1 199.8 608.1 195.8 608.0 193.0C607.9 190.2 608.8 187.4 609.5 185.0C610.2 182.6 611.3 180.5 612.5 178.5C613.7 176.5 615.0 174.5 616.5 173.0C618.0 171.5 618.9 170.5 621.4 169.6C623.9 168.7 628.7 166.7 631.5 167.3Z" fill="#ebebf1" stroke="#242021" stroke-width="2.700" opacity=".93"/>
<path d="M630.6 166.7C633.4 167.4 636.6 170.4 638.6 172.8C640.6 175.2 641.8 177.8 642.7 181.1C643.5 184.3 644.1 188.7 643.8 192.1C643.6 195.4 642.7 198.8 641.3 201.1C639.8 203.4 637.1 204.7 635.0 206.0C632.9 207.4 630.5 208.5 628.5 209.3C626.5 210.1 625.6 211.3 623.1 210.8C620.7 210.2 615.9 207.4 613.9 206.1C611.8 204.9 611.9 205.8 611.0 203.3C610.1 200.9 608.9 194.9 608.7 191.6C608.5 188.4 609.1 185.8 609.8 183.8C610.5 181.8 611.7 181.0 612.6 179.4C613.6 177.8 613.8 176.0 615.3 174.3C616.9 172.5 619.4 170.1 621.9 168.9C624.5 167.6 627.9 166.0 630.6 166.7Z" stroke="#8a8486" stroke-width="1.0" opacity="0.45"/>
<path d="M631.5 192.0C630.8 193.9 629.8 195.9 628.8 197.5C627.8 199.0 626.5 200.5 625.3 201.4C624.1 202.3 622.8 202.9 621.7 203.0C620.7 203.0 619.6 202.7 618.8 201.9C618.1 201.1 617.4 199.8 617.1 198.4C616.8 196.9 616.7 195.0 617.0 193.2C617.2 191.3 617.7 189.1 618.4 187.2C619.1 185.3 620.1 183.3 621.1 181.7C622.2 180.2 623.4 178.7 624.6 177.8C625.8 176.9 627.1 176.3 628.2 176.3C629.3 176.2 630.3 176.6 631.1 177.3C631.9 178.1 632.5 179.4 632.8 180.8C633.1 182.3 633.2 184.2 633.0 186.1C632.8 187.9 632.2 190.1 631.5 192.0Z" stroke="#b0aab4" stroke-width="0.8" opacity="0.50"/>
<path d="M827.0 190.8C829.5 190.4 831.1 190.6 833.0 191.0C834.9 191.4 837.0 191.5 838.2 193.0C839.5 194.5 840.1 197.6 840.5 200.0C840.9 202.4 841.0 205.0 840.4 207.6C839.8 210.2 838.5 213.1 837.0 215.5C835.5 217.9 833.7 220.2 831.5 222.0C829.3 223.8 826.4 225.1 824.0 226.0C821.6 226.9 819.2 227.7 817.0 227.7C814.8 227.7 812.4 226.9 810.5 226.0C808.6 225.1 807.0 223.7 805.8 222.0C804.5 220.3 803.6 218.0 803.0 216.0C802.4 214.0 802.1 211.8 802.4 209.8C802.7 207.8 803.7 205.9 805.0 204.0C806.3 202.1 808.0 200.3 810.2 198.6C812.4 196.8 815.2 194.8 818.0 193.5C820.8 192.2 824.5 191.2 827.0 190.8Z" fill="#ebebf1" stroke="#242021" stroke-width="2.700" opacity=".93"/>
<path d="M826.1 190.6C828.8 190.4 832.2 191.1 834.0 191.2C835.8 191.4 836.2 190.0 837.0 191.6C837.9 193.2 838.9 198.2 839.3 200.9C839.7 203.6 839.9 205.2 839.5 207.8C839.0 210.3 837.8 213.9 836.4 216.1C835.0 218.3 833.0 219.3 831.1 220.9C829.3 222.6 827.4 224.8 825.1 226.1C822.9 227.4 819.8 228.9 817.6 228.6C815.4 228.4 813.9 225.8 811.8 224.5C809.8 223.3 806.8 222.2 805.3 221.0C803.9 219.7 803.3 219.2 803.0 217.1C802.7 215.0 803.1 210.4 803.3 208.4C803.5 206.4 802.8 206.6 804.0 205.0C805.3 203.3 808.4 200.4 810.7 198.3C813.1 196.2 815.4 193.7 817.9 192.5C820.5 191.2 823.4 190.8 826.1 190.6Z" stroke="#8a8486" stroke-width="1.0" opacity="0.45"/>
<path d="M828.0 211.4C827.4 213.3 826.3 215.3 825.3 216.8C824.3 218.4 823.0 219.8 821.8 220.7C820.6 221.7 819.3 222.2 818.3 222.3C817.2 222.4 816.1 222.0 815.3 221.3C814.6 220.5 813.9 219.2 813.6 217.8C813.3 216.3 813.2 214.4 813.5 212.5C813.7 210.6 814.2 208.5 814.9 206.6C815.6 204.7 816.6 202.7 817.6 201.1C818.7 199.5 819.9 198.1 821.1 197.2C822.3 196.3 823.6 195.7 824.7 195.6C825.8 195.5 826.8 195.9 827.6 196.7C828.4 197.4 829.0 198.7 829.3 200.2C829.6 201.6 829.7 203.6 829.5 205.4C829.3 207.3 828.7 209.5 828.0 211.4Z" stroke="#b0aab4" stroke-width="0.8" opacity="0.50"/>
</g></svg>
  <svg class="a" style="left:819px;top:330px" width="26" height="26" viewBox="935 469 26 26"><path d="M940.800 473.400l.2 12.300 7.500-4.300z" fill="#050505"/><g stroke="#2a2a2a" stroke-width="1.200"><path d="M952.100 481.200v7.800M948.200 485.100h7.800"/></g><g fill="#2a2a2a"><circle cx="952.100" cy="481.200" r="1.300"/><circle cx="952.100" cy="489" r="1.300"/><circle cx="948.200" cy="485.100" r="1.300"/><circle cx="956" cy="485.100" r="1.300"/></g></svg>
</div>
<div class="a" style="left:1245px;top:139px;width:5px;height:671px;background:#454547"></div>
<div class="a" style="left:1250px;top:139px;width:2px;height:671px;background:#505052"></div>
<div class="a" style="left:1250px;top:139px;width:2px;height:22px;background:#3c3c3e"></div>
<div class="a" style="left:1250px;top:505px;width:2px;height:22px;background:#3c3c3e"></div>
<div class="a" style="left:1250px;top:577px;width:2px;height:25px;background:#3e3e40"></div>
<div id="style" class="a" style="left:1252px;top:139px;width:270px;height:366px;background:#505052">
  <div class="hd" style="left:0;top:0;width:270px;height:22px;line-height:23px;font-size:14.500px;padding-left:5px">Style</div>
  <div class="cb" style="left:8px;top:36px;width:14px;height:13px;background:#454547"></div>
  <div class="cb" style="left:8px;top:62px;width:14px;height:13px;background:#454547"></div>
  <svg class="a" style="left:6px;top:32px" width="20" height="46" viewBox="0 0 20 46"><g fill="none" stroke="#7d6a3e" stroke-width="1.800"><path d="M4.500 6.500l3.500 8 5-10"/><path d="M4.500 32.500l3.500 8 5-10"/></g></svg>
  <span class="t" style="left:27px;top:37px;color:#6e6e70">Fill</span>
  <span class="t" style="left:27px;top:63px;color:#6e6e70">Stroke</span>
  <div class="a" style="left:79px;top:31px;width:51px;height:20px;background:#fff;border:1px solid #3a3a3c"></div>
  <div class="a" style="left:79px;top:58px;width:51px;height:20px;background:#000;border:1px solid #3a3a3c"></div>
  <svg class="a" style="left:136px;top:30px" width="26" height="50" viewBox="0 0 26 50"><g id="edp"><path d="M3.500 21l1.200-3.800 9-9 2.600 2.600-9 9z" fill="none" stroke="#f0f0f0" stroke-width="1.400"/><path d="M12.500 6.500l2.300-2.300c1.400-1.400 3.600-1.600 5-.2s1.200 3.600-.2 5l-2.300 2.300 1 1-1.500 1.500-6.300-6.300 1.500-1.500z" fill="#d8a440"/></g><use href="#edp" y="26.500"/></svg>
  <div class="a" style="left:173px;top:49px;width:56px;height:55px;background:#ececec"></div>
  <span class="t" style="left:173px;top:62px;width:56px;text-align:center;font-size:14.500px;color:#3a3a3a">No</span>
  <span class="t" style="left:173px;top:80px;width:56px;text-align:center;font-size:14.500px;color:#3a3a3a">Brush</span>
  <span class="t" style="left:8px;top:90px">Width</span>
  <div class="inp" style="left:80px;top:85px;width:81px;height:19px">4</div>
  <span class="t" style="left:8px;top:116px">Effect</span>
  <div class="dd" style="left:79px;top:111px;width:83px;height:21px"></div>
  <span class="t" style="left:90px;top:116px;font-size:12px">&lt;plain&gt;</span>
  <span class="t" style="left:146px;top:117px;font-size:10px;color:#bdbdbd">▼</span>
  <div class="btn" style="left:173px;top:112px;width:31px;height:18px;background:#454547"></div>
  <span class="t" style="left:182px;top:114px;color:#6e6e70;font-size:13px">...</span>
  <div class="a" style="left:18px;top:137px;width:215px;height:1px;background:#434345"></div>
  <span class="t" style="left:8px;top:150px">Swatches</span>
  <div class="dd" style="left:77px;top:144px;width:166px;height:21px"></div>
  <span class="t" style="left:104px;top:149px;font-size:12px">Basic Colors.png</span>
  <span class="t" style="left:226px;top:150px;font-size:10px;color:#bdbdbd">▼</span>
  <svg class="a" style="left:0;top:0" width="270" height="366" viewBox="0 0 270 366"><rect x="18.3" y="169.7" width="213.4" height="133.9" fill="#2c2c2e"/><rect x="19.5" y="170.9" width="12.0" height="12.0" fill="#e8261c"/><rect x="32.8" y="170.9" width="12.0" height="12.0" fill="#fbf234"/><rect x="46.1" y="170.9" width="12.0" height="12.0" fill="#45e632"/><rect x="59.3" y="170.9" width="12.0" height="12.0" fill="#3ee8f2"/><rect x="72.6" y="170.9" width="12.0" height="12.0" fill="#1f3be0"/><rect x="85.9" y="170.9" width="12.0" height="12.0" fill="#e83df0"/><rect x="99.2" y="170.9" width="12.0" height="12.0" fill="#ffffff"/><rect x="112.5" y="170.9" width="12.0" height="12.0" fill="#ebebeb"/><rect x="125.8" y="170.9" width="12.0" height="12.0" fill="#e0e0e0"/><rect x="139.0" y="170.9" width="12.0" height="12.0" fill="#d6d6d6"/><rect x="152.3" y="170.9" width="12.0" height="12.0" fill="#cccccc"/><rect x="165.6" y="170.9" width="12.0" height="12.0" fill="#c2c2c2"/><rect x="178.9" y="170.9" width="12.0" height="12.0" fill="#b8b8b8"/><rect x="192.2" y="170.9" width="12.0" height="12.0" fill="#adadad"/><rect x="205.4" y="170.9" width="12.0" height="12.0" fill="#a3a3a3"/><rect x="218.7" y="170.9" width="12.0" height="12.0" fill="#999999"/><rect x="19.5" y="184.2" width="12.0" height="12.0" fill="#b81c3c"/><rect x="32.8" y="184.2" width="12.0" height="12.0" fill="#f5ee3a"/><rect x="46.1" y="184.2" width="12.0" height="12.0" fill="#3fae58"/><rect x="59.3" y="184.2" width="12.0" height="12.0" fill="#4aa5e0"/><rect x="72.6" y="184.2" width="12.0" height="12.0" fill="#3c1f96"/><rect x="85.9" y="184.2" width="12.0" height="12.0" fill="#b0248c"/><rect x="99.2" y="184.2" width="12.0" height="12.0" fill="#8f8f8f"/><rect x="112.5" y="184.2" width="12.0" height="12.0" fill="#858585"/><rect x="125.8" y="184.2" width="12.0" height="12.0" fill="#7a7a7a"/><rect x="139.0" y="184.2" width="12.0" height="12.0" fill="#707070"/><rect x="152.3" y="184.2" width="12.0" height="12.0" fill="#5c5c5c"/><rect x="165.6" y="184.2" width="12.0" height="12.0" fill="#525252"/><rect x="178.9" y="184.2" width="12.0" height="12.0" fill="#474747"/><rect x="192.2" y="184.2" width="12.0" height="12.0" fill="#333333"/><rect x="205.4" y="184.2" width="12.0" height="12.0" fill="#1f1f1f"/><rect x="218.7" y="184.2" width="12.0" height="12.0" fill="#000000"/><rect x="19.5" y="197.5" width="12.0" height="12.0" fill="#e8a898"/><rect x="32.8" y="197.5" width="12.0" height="12.0" fill="#ecc09a"/><rect x="46.1" y="197.5" width="12.0" height="12.0" fill="#eed8a0"/><rect x="59.3" y="197.5" width="12.0" height="12.0" fill="#f8f8a8"/><rect x="72.6" y="197.5" width="12.0" height="12.0" fill="#d8e8a8"/><rect x="85.9" y="197.5" width="12.0" height="12.0" fill="#c0e0a8"/><rect x="99.2" y="197.5" width="12.0" height="12.0" fill="#a8d8b0"/><rect x="112.5" y="197.5" width="12.0" height="12.0" fill="#a8d8c8"/><rect x="125.8" y="197.5" width="12.0" height="12.0" fill="#a8d4f0"/><rect x="139.0" y="197.5" width="12.0" height="12.0" fill="#a8b8e8"/><rect x="152.3" y="197.5" width="12.0" height="12.0" fill="#a8a0d8"/><rect x="165.6" y="197.5" width="12.0" height="12.0" fill="#b8a0d8"/><rect x="178.9" y="197.5" width="12.0" height="12.0" fill="#c8a0d8"/><rect x="192.2" y="197.5" width="12.0" height="12.0" fill="#d0a0d0"/><rect x="205.4" y="197.5" width="12.0" height="12.0" fill="#e8a8d0"/><rect x="218.7" y="197.5" width="12.0" height="12.0" fill="#e8a0a8"/><rect x="19.5" y="210.8" width="12.0" height="12.0" fill="#d87060"/><rect x="32.8" y="210.8" width="12.0" height="12.0" fill="#e09a60"/><rect x="46.1" y="210.8" width="12.0" height="12.0" fill="#e8c060"/><rect x="59.3" y="210.8" width="12.0" height="12.0" fill="#f8f860"/><rect x="72.6" y="210.8" width="12.0" height="12.0" fill="#c0e070"/><rect x="85.9" y="210.8" width="12.0" height="12.0" fill="#98d078"/><rect x="99.2" y="210.8" width="12.0" height="12.0" fill="#78c888"/><rect x="112.5" y="210.8" width="12.0" height="12.0" fill="#78c8b0"/><rect x="125.8" y="210.8" width="12.0" height="12.0" fill="#78c0e8"/><rect x="139.0" y="210.8" width="12.0" height="12.0" fill="#7098d8"/><rect x="152.3" y="210.8" width="12.0" height="12.0" fill="#7078c8"/><rect x="165.6" y="210.8" width="12.0" height="12.0" fill="#8868c0"/><rect x="178.9" y="210.8" width="12.0" height="12.0" fill="#a068c0"/><rect x="192.2" y="210.8" width="12.0" height="12.0" fill="#b868b8"/><rect x="205.4" y="210.8" width="12.0" height="12.0" fill="#d868a8"/><rect x="218.7" y="210.8" width="12.0" height="12.0" fill="#d86878"/><rect x="19.5" y="224.1" width="12.0" height="12.0" fill="#c81838"/><rect x="32.8" y="224.1" width="12.0" height="12.0" fill="#d86830"/><rect x="46.1" y="224.1" width="12.0" height="12.0" fill="#e8a030"/><rect x="59.3" y="224.1" width="12.0" height="12.0" fill="#f8f030"/><rect x="72.6" y="224.1" width="12.0" height="12.0" fill="#98d038"/><rect x="85.9" y="224.1" width="12.0" height="12.0" fill="#60c048"/><rect x="99.2" y="224.1" width="12.0" height="12.0" fill="#38b058"/><rect x="112.5" y="224.1" width="12.0" height="12.0" fill="#38a898"/><rect x="125.8" y="224.1" width="12.0" height="12.0" fill="#38a8e0"/><rect x="139.0" y="224.1" width="12.0" height="12.0" fill="#3878d0"/><rect x="152.3" y="224.1" width="12.0" height="12.0" fill="#3848b8"/><rect x="165.6" y="224.1" width="12.0" height="12.0" fill="#4820a0"/><rect x="178.9" y="224.1" width="12.0" height="12.0" fill="#7020a0"/><rect x="192.2" y="224.1" width="12.0" height="12.0" fill="#9820a0"/><rect x="205.4" y="224.1" width="12.0" height="12.0" fill="#c02090"/><rect x="218.7" y="224.1" width="12.0" height="12.0" fill="#c81858"/><rect x="19.5" y="237.4" width="12.0" height="12.0" fill="#980828"/><rect x="32.8" y="237.4" width="12.0" height="12.0" fill="#a85020"/><rect x="46.1" y="237.4" width="12.0" height="12.0" fill="#b88020"/><rect x="59.3" y="237.4" width="12.0" height="12.0" fill="#c0c020"/><rect x="72.6" y="237.4" width="12.0" height="12.0" fill="#78a830"/><rect x="85.9" y="237.4" width="12.0" height="12.0" fill="#489838"/><rect x="99.2" y="237.4" width="12.0" height="12.0" fill="#288848"/><rect x="112.5" y="237.4" width="12.0" height="12.0" fill="#288878"/><rect x="125.8" y="237.4" width="12.0" height="12.0" fill="#2880a8"/><rect x="139.0" y="237.4" width="12.0" height="12.0" fill="#285898"/><rect x="152.3" y="237.4" width="12.0" height="12.0" fill="#283088"/><rect x="165.6" y="237.4" width="12.0" height="12.0" fill="#381078"/><rect x="178.9" y="237.4" width="12.0" height="12.0" fill="#581078"/><rect x="192.2" y="237.4" width="12.0" height="12.0" fill="#781078"/><rect x="205.4" y="237.4" width="12.0" height="12.0" fill="#980868"/><rect x="218.7" y="237.4" width="12.0" height="12.0" fill="#980840"/><rect x="19.5" y="250.7" width="12.0" height="12.0" fill="#680818"/><rect x="32.8" y="250.7" width="12.0" height="12.0" fill="#783810"/><rect x="46.1" y="250.7" width="12.0" height="12.0" fill="#886018"/><rect x="59.3" y="250.7" width="12.0" height="12.0" fill="#888818"/><rect x="72.6" y="250.7" width="12.0" height="12.0" fill="#587820"/><rect x="85.9" y="250.7" width="12.0" height="12.0" fill="#306828"/><rect x="99.2" y="250.7" width="12.0" height="12.0" fill="#186030"/><rect x="112.5" y="250.7" width="12.0" height="12.0" fill="#186050"/><rect x="125.8" y="250.7" width="12.0" height="12.0" fill="#185878"/><rect x="139.0" y="250.7" width="12.0" height="12.0" fill="#183868"/><rect x="152.3" y="250.7" width="12.0" height="12.0" fill="#182060"/><rect x="165.6" y="250.7" width="12.0" height="12.0" fill="#280858"/><rect x="178.9" y="250.7" width="12.0" height="12.0" fill="#400858"/><rect x="192.2" y="250.7" width="12.0" height="12.0" fill="#580858"/><rect x="205.4" y="250.7" width="12.0" height="12.0" fill="#680848"/><rect x="218.7" y="250.7" width="12.0" height="12.0" fill="#680828"/><rect x="19.5" y="264.0" width="12.0" height="12.0" fill="#c8b8a0"/><rect x="32.8" y="264.0" width="12.0" height="12.0" fill="#a09888"/><rect x="46.1" y="264.0" width="12.0" height="12.0" fill="#807868"/><rect x="59.3" y="264.0" width="12.0" height="12.0" fill="#605848"/><rect x="72.6" y="264.0" width="12.0" height="12.0" fill="#403838"/><rect x="85.9" y="264.0" width="12.0" height="12.0" fill="#c8a878"/><rect x="99.2" y="264.0" width="12.0" height="12.0" fill="#a88858"/><rect x="112.5" y="264.0" width="12.0" height="12.0" fill="#886838"/><rect x="125.8" y="264.0" width="12.0" height="12.0" fill="#684820"/><rect x="139.0" y="264.0" width="12.0" height="12.0" fill="#584018"/><rect x="152.3" y="264.0" width="12.0" height="12.0" fill="#ffffff"/><rect x="165.6" y="264.0" width="12.0" height="12.0" fill="#ffffd8"/><rect x="178.9" y="264.0" width="12.0" height="12.0" fill="#ffffa8"/><rect x="192.2" y="264.0" width="12.0" height="12.0" fill="#ffff80"/><rect x="205.4" y="264.0" width="12.0" height="12.0" fill="#f8f850"/><rect x="218.7" y="264.0" width="12.0" height="12.0" fill="#f8f030"/><rect x="19.5" y="277.3" width="12.0" height="12.0" fill="#f8d840"/><rect x="32.8" y="277.3" width="12.0" height="12.0" fill="#f8c8f0"/><rect x="46.1" y="277.3" width="12.0" height="12.0" fill="#f8c8c8"/><rect x="59.3" y="277.3" width="12.0" height="12.0" fill="#f8c8a0"/><rect x="72.6" y="277.3" width="12.0" height="12.0" fill="#f8c870"/><rect x="85.9" y="277.3" width="12.0" height="12.0" fill="#f8c840"/><rect x="99.2" y="277.3" width="12.0" height="12.0" fill="#f8c030"/><rect x="112.5" y="277.3" width="12.0" height="12.0" fill="#f0a030"/><rect x="125.8" y="277.3" width="12.0" height="12.0" fill="#f090e8"/><rect x="139.0" y="277.3" width="12.0" height="12.0" fill="#f090c0"/><rect x="152.3" y="277.3" width="12.0" height="12.0" fill="#f09090"/><rect x="165.6" y="277.3" width="12.0" height="12.0" fill="#f09068"/><rect x="178.9" y="277.3" width="12.0" height="12.0" fill="#f09040"/><rect x="192.2" y="277.3" width="12.0" height="12.0" fill="#f09028"/><rect x="205.4" y="277.3" width="12.0" height="12.0" fill="#e860f0"/><rect x="218.7" y="277.3" width="12.0" height="12.0" fill="#e860c8"/><rect x="19.5" y="290.6" width="12.0" height="12.0" fill="#e860a0"/><rect x="32.8" y="290.6" width="12.0" height="12.0" fill="#e86070"/><rect x="46.1" y="290.6" width="12.0" height="12.0" fill="#e86040"/><rect x="59.3" y="290.6" width="12.0" height="12.0" fill="#e86020"/><rect x="72.6" y="290.6" width="12.0" height="12.0" fill="#e838c8"/><rect x="85.9" y="290.6" width="12.0" height="12.0" fill="#e838a0"/><rect x="99.2" y="290.6" width="12.0" height="12.0" fill="#e83878"/><rect x="112.5" y="290.6" width="12.0" height="12.0" fill="#e83848"/><rect x="125.8" y="290.6" width="12.0" height="12.0" fill="#e83020"/><rect x="139.0" y="290.6" width="12.0" height="12.0" fill="#e030f0"/><rect x="152.3" y="290.6" width="12.0" height="12.0" fill="#d830c0"/><rect x="165.6" y="290.6" width="12.0" height="12.0" fill="#e03098"/><rect x="178.9" y="290.6" width="12.0" height="12.0" fill="#e03068"/><rect x="192.2" y="290.6" width="12.0" height="12.0" fill="#e03040"/><rect x="205.4" y="290.6" width="12.0" height="12.0" fill="#e02818"/><rect x="218.7" y="290.6" width="12.0" height="12.0" fill="#ffffff"/></svg>
  <div class="btn" style="left:29px;top:309px;width:54px;height:21px;background:#454547"></div>
  <span class="t" style="left:29px;top:312px;width:54px;text-align:center;font-size:14.500px;color:#f0f0f0">Copy</span>
  <div class="btn" style="left:96px;top:309px;width:55px;height:21px;background:#454547"></div>
  <span class="t" style="left:96px;top:312px;width:55px;text-align:center;font-size:14.500px;color:#747476">Paste</span>
  <div class="btn" style="left:164px;top:309px;width:57px;height:21px;background:#454547"></div>
  <span class="t" style="left:164px;top:312px;width:57px;text-align:center;font-size:14.500px;color:#f0f0f0">Reset</span>
  <div class="cb" style="left:8px;top:338px;width:14px;height:14px;background:#454547"></div>
  <span class="t" style="left:27px;top:340px">Advanced</span>
  <div class="cb" style="left:98px;top:338px;width:13px;height:14px;background:#454547"></div>
  <span class="t" style="left:117px;top:340px">Checker selection</span>
</div>
<div id="layers" class="a" style="left:1252px;top:506px;width:270px;height:304px;background:#525254">
  <div class="hd" style="left:0;top:0;width:270px;height:21px;line-height:22px;font-size:14.500px;padding-left:5px">Layers</div>
  <div class="a" style="left:0;top:21px;width:270px;height:23px;background:#4f4f51"></div>
  <div class="btn" style="left:0px;top:22px;width:26px;height:21px"></div>
  <div class="btn" style="left:29px;top:22px;width:27px;height:21px"></div>
  <div class="btn" style="left:59px;top:22px;width:27px;height:21px"></div>
  <div class="btn" style="left:89px;top:22px;width:28px;height:21px;background:#464648"></div>
  <div class="btn" style="left:120px;top:22px;width:27px;height:21px"></div>
  <div class="btn" style="left:150px;top:22px;width:26px;height:21px"></div>
  <div class="btn" style="left:255px;top:22px;width:15px;height:21px;background:#3e3e40"></div>
  <div class="dd" style="left:1px;top:46px;width:120px;height:21px"></div>
  <span class="t" style="left:5px;top:51px;font-size:12px">Name contains...</span>
  <span class="t" style="left:105px;top:52px;font-size:10px;color:#bdbdbd">▼</span>
  <div class="a" style="left:127px;top:47px;width:143px;height:19px;background:#e8e8e8;border:1px solid #f4f4f4"></div>
  <div class="a" style="left:0;top:71px;width:270px;height:24.500px;background:#3e3e40"></div>
  <div class="a" style="left:35px;top:71px;width:1px;height:25px;background:#4a4a4c"></div>
  <div class="a" style="left:216px;top:71px;width:1px;height:25px;background:#4a4a4c"></div>
  <div class="a" style="left:242px;top:71px;width:1px;height:25px;background:#4a4a4c"></div>
  <span class="t" style="left:70px;top:78px;font-size:12px">Name</span>
  <div class="a" style="left:1px;top:96.500px;width:255px;height:24.500px;background:#c69434"></div>
  <div class="a" style="left:9px;top:99px;width:23px;height:18px;background:#5c5c5e;border:1px solid #77777a"></div>
  <div class="a" style="left:43px;top:101px;width:14px;height:14px;background:#3e3e40"></div>
  <span class="t" style="left:120px;top:103px;font-size:13.300px;color:#2c2620">Layer 1</span>
  <div class="a" style="left:193px;top:101px;width:14px;height:14px;background:#77777a;border:1px solid #b89a5a"></div>
  <div class="a" style="left:257px;top:96px;width:13px;height:208px;background:#48484a"></div>
  <svg class="a" style="left:0;top:0" width="270" height="130" viewBox="1252 506 270 130">
    <g fill="none" stroke="#e4e4e4" stroke-width="1.700" stroke-linejoin="round" stroke-linecap="round">
      <path d="M1259 531h7.500v3M1266.500 539.500v4.500h-11v-9.500l3.500-3.500v3.500h-3.500"/>
      <path d="M1270 532v9M1265.500 536.500h9" stroke="#e0a83c" stroke-width="2.400" stroke-linecap="butt"/>
      <path d="M1291 530h7v11.500h-10.500v-8.500zM1287.500 533h3.500v-3"/>
      <path d="M1300.500 534.500h1.500v11h-10.500v-1.500" />
      <path d="M1319 531h7v3M1326 539.500v4.500h-11v-9.500l3.500-3.500v3.500h-3.500"/>
      <path d="M1321.500 536.500h10" stroke="#e0a83c" stroke-width="2.400" stroke-linecap="butt"/>
      <path d="M1329.500 532l4.500 4.500-4.500 4.500z" fill="#e0a83c" stroke="none"/>
      <path d="M1410 531h6l3 3v8h-9.500" stroke="#dcdcdc"/>
      <path d="M1412 545h9.500v-8" stroke="#bdbdbd" stroke-width="1.300"/>
      <circle cx="1411" cy="535.500" r="4.300" fill="#434345" stroke="#e4e4e4"/>
    </g>
    <g fill="#636365"><path d="M1350.500 533h9.500l-.7 11h-8.100z"/><rect x="1349.500" y="530.800" width="11.500" height="1.600"/><rect x="1353.500" y="529.300" width="3.500" height="1.600"/></g>
    <g fill="#ececec"><rect x="1377.300" y="535.700" width="2.800" height="2.800"/><rect x="1382.900" y="535.700" width="2.800" height="2.800"/><rect x="1388.500" y="535.700" width="2.800" height="2.800"/></g>
    <path d="M1510 538l5-5 5 5" fill="none" stroke="#f0f0f0" stroke-width="2"/>
    <!-- header icons -->
    <g fill="#f2f2f2" stroke="none"><ellipse cx="1266.800" cy="588.800" rx="3" ry="3.300"/><ellipse cx="1272.300" cy="589.600" rx="3.500" ry="4"/></g><circle cx="1265.800" cy="589.800" r="1.500" fill="#3e3e40"/><circle cx="1271.600" cy="590.600" r="1.700" fill="#3e3e40"/><g fill="none" stroke="#efefef" stroke-width="1.600"><circle cx="1302" cy="590.300" r="4.300"/><path d="M1302 586v-2M1299.800 583.300h4.400M1302 590.300v-2.300" stroke-width="1.400"/></g>
    <rect x="1446.500" y="583.500" width="5.500" height="10" fill="#5ed28a"/><rect x="1452" y="583.500" width="5.500" height="10" fill="#f0d84a"/><rect x="1446.500" y="583.500" width="11" height="3" fill="#7ad0e8" opacity=".8"/>
    <path d="M1476.500 585.500h9l-4.500 7z" fill="#f2f2f2"/>
    <!-- layer row icons -->
    <g fill="#fff" stroke="#2a2a2a" stroke-width=".800"><ellipse cx="1268.300" cy="613.800" rx="3.800" ry="4.600"/><ellipse cx="1275.600" cy="614" rx="4.600" ry="5"/></g>
    <circle cx="1267" cy="615.300" r="1.700" fill="#111"/><circle cx="1275.300" cy="615.200" r="2.200" fill="#111"/><path d="M1265 611.500c1.500-1.300 3.500-1.500 5-.5" stroke="#444" stroke-width="1" fill="none"/>
    <path d="M1346 616.500c-1-3.200 1.200-5.500 4.400-4.900 2.700.5 3.900-2.100 6.700-2.700 3.700-.7 6.300 2 5.500 5.500-1 3.900-4.600 6.700-9.500 6.700-3.700 0-6.400-1.600-7.100-4.600z" fill="none" stroke="#f8ecd0" stroke-width="1.800"/>
    <path d="M1476.500 610.500h10l-5 7.500z" fill="#f6efe0"/>
    <path d="M1510.500 616.500h9l-4.500-7z" fill="#7a7a7c"/>
  </svg>
</div>
<div id="playbar" class="a" style="left:0;top:549px;width:1245px;height:30px;background:#4d4d4f;border-bottom:2px solid #3c3c3e">
  <div class="a" style="left:0;top:0;width:1245px;height:1px;background:#454547"></div>
  <div class="btn" style="left:428px;top:5px;width:26px;height:20px;background:#434345"></div>
  <div class="btn" style="left:458px;top:5px;width:26px;height:20px;background:#434345"></div>
  <div class="btn" style="left:488px;top:5px;width:26px;height:20px;background:#434345"></div>
  <div class="btn" style="left:518px;top:5px;width:26px;height:20px;background:#434345"></div>
  <div class="btn" style="left:548px;top:5px;width:26px;height:20px;background:#434345"></div>
  <div class="btn" style="left:578px;top:5px;width:26px;height:20px;background:#434345"></div>
  <div class="btn" style="left:608px;top:5px;width:26px;height:20px;background:#434345"></div>
  <span class="t" style="left:648.500px;top:9.500px;font-size:12px">Frame</span>
  <div class="inp" style="left:692px;top:5px;width:87px;height:19px">0</div>
  <span class="t" style="left:786px;top:9.500px;font-size:12px">of</span>
  <div class="inp" style="left:804px;top:5px;width:88px;height:19px">240</div>
  <div class="btn" style="left:907px;top:4px;width:26px;height:21px;background:#424244"></div>
  <div class="cb" style="left:1072px;top:7px;width:14px;height:14px;background:#3c3c3e"></div>
  <div class="btn" style="left:1094px;top:4px;width:22px;height:21px;background:#454547"></div>
  <div class="dd" style="left:1119px;top:4px;width:123px;height:21px"></div>
  <span class="t" style="left:1130px;top:9.500px;font-size:12px">Display Quality</span>
  <span class="t" style="left:1226px;top:10px;font-size:10px;color:#bdbdbd">▼</span>
  <svg class="a" style="left:420px;top:0" width="700" height="28" viewBox="420 549 700 28"><g fill="none" stroke-width="1.500" stroke-linejoin="miter">
   <g stroke="#707072"><circle cx="436.500" cy="563.700" r="4"/><path d="M449.500 558.500v10.500l-8-5.200z"/><path d="M465 558.500h2.500v10.500h-2.500zM478.500 558.500v10.500l-8.500-5.200z"/><path d="M501 558.500v10.500l-7.500-5.200zM510.500 558.500v10.500l-7.500-5.200z"/></g>
   <g stroke="#f0f0f0"><path d="M527 558v11.500l9-5.700z"/><path d="M553 558.500v10.500l7.500-5.200zM562.500 558.500v10.500l7.500-5.200z"/><path d="M584 558.500v10.500l8-5.200zM595 558.500h2.500v10.500h-2.500z"/><path d="M612.500 558.500v10.500l8-5.200z"/><circle cx="625.500" cy="563.700" r="4"/></g>
   <g stroke="#f0f0f0" stroke-width="1.400"><path d="M913.500 561h3l4.500-3.500v12.500l-4.500-3.500h-3z"/><path d="M923.500 560.500c1.300 1.800 1.300 4.700 0 6.500M926 558c2.500 3.300 2.500 8.200 0 11.500" stroke-linecap="round"/></g>
   <rect x="982" y="555" width="17" height="17" stroke="#b48c42" fill="#4d4d4f"/>
   <g stroke="#e8e8e8" fill="#7c7c7e"><rect x="1002.500" y="555" width="17" height="17"/><path d="M1011 555v17"/><rect x="1023" y="555" width="17" height="17"/><path d="M1023 563.500h17"/><rect x="1043.500" y="555" width="17" height="17"/><path d="M1052 555v17M1043.500 563.500h17"/></g>
   <rect x="1099" y="559.500" width="12" height="11" stroke="#f0f0f0" stroke-width="1.800"/><g fill="#f0f0f0"><circle cx="1099" cy="559.500" r="1.800"/><circle cx="1099" cy="570.500" r="1.800"/><circle cx="1111" cy="570.500" r="1.800"/></g><path d="M1107.500 557.500h5.500v5.500z" fill="#e0a63c" stroke="none"/>
  </g></svg>
</div>
<div id="timeline" class="a" style="left:0;top:580px;width:1245px;height:230px;background:#535355">
  <div class="a" style="left:0;top:0;width:1245px;height:31px;background:#4d4d4f"></div>
  <div class="a" style="left:0;top:0;width:41px;height:230px;background:#525254;border-right:1px solid #48484a"></div>
  <div class="a" style="left:2px;top:34px;width:16px;height:19px;background:#3e3e40"></div>
  <div class="a" style="left:62px;top:5px;width:81px;height:26px;background:#55575b"></div>
  <div class="a" style="left:144px;top:5px;width:87px;height:26px;background:#3e3e40"></div>
  <div class="a" style="left:232px;top:5px;width:108px;height:26px;background:#3e3e40"></div>
  <span class="t" style="left:62px;top:12px;width:81px;text-align:center;font-size:14.500px;color:#ececec">Channels</span>
  <span class="t" style="left:144px;top:12px;width:87px;text-align:center;font-size:14.500px;color:#ececec">Sequencer</span>
  <span class="t" style="left:232px;top:12px;width:108px;text-align:center;font-size:14.500px;color:#ececec">Motion Graph</span>
  <div class="dd" style="left:379px;top:6px;width:120px;height:20px"></div>
  <span class="t" style="left:408.500px;top:10.500px;font-size:12px">Smooth</span>
  <span class="t" style="left:482px;top:11px;font-size:10px;color:#bdbdbd">▼</span>
  <div class="dd" style="left:503px;top:6px;width:47px;height:20px"></div>
  <span class="t" style="left:512px;top:10.500px;font-size:12px">1</span>
  <span class="t" style="left:534px;top:11px;font-size:10px;color:#bdbdbd">▼</span>
  <div class="btn" style="left:556px;top:5px;width:26px;height:21px;background:#424244"></div>
  <div class="dd" style="left:587px;top:6px;width:105px;height:20px"></div>
  <span class="t" style="left:597.500px;top:10.500px;font-size:12px;color:#79797b">Onion Skins</span>
  <span class="t" style="left:675px;top:11px;font-size:10px;color:#bdbdbd">▼</span>
  <div class="cb" style="left:701px;top:9px;width:14px;height:14px;background:#414143"></div>
  <span class="t" style="left:720px;top:10.500px;font-size:12px">Relative keyframing</span>
  <div class="btn" style="left:842px;top:5px;width:26px;height:21px;background:#424244"></div>
  <div class="cb" style="left:878px;top:9px;width:14px;height:14px;background:#414143"></div>
  <span class="t" style="left:897px;top:10.500px;font-size:12px">Auto-freeze keys</span>
  <div class="btn" style="left:1182px;top:5px;width:26px;height:21px;background:#424244"></div>
  <div class="btn" style="left:1213px;top:5px;width:27px;height:21px;background:#424244"></div>
  <div class="a" style="left:42px;top:31px;width:1183px;height:36px;background:#3e3e40"></div>
  <div class="a" style="left:60px;top:32px;width:1165px;height:16px;background:#876a3b"></div>
  <div class="a" style="left:1225px;top:31px;width:20px;height:199px;background:#414043"></div>
  <span class="t" style="left:1229px;top:36px;font-size:10px;color:#9a9a9c">▲</span>
  <svg class="a" style="left:0;top:0" width="1245" height="230" viewBox="0 580 1245 230" font-family="Liberation Sans, sans-serif">
   <path d="M61.6 625.5v2.5M71.2 625.5v2.5M80.8 625.5v2.5M90.4 625.5v2.5M100.0 625.5v2.5M109.6 624v4M119.2 625.5v2.5M128.8 625.5v2.5M138.4 625.5v2.5M148.0 625.5v2.5M157.6 625.5v2.5M167.2 624v4M176.8 625.5v2.5M186.4 625.5v2.5M196.0 625.5v2.5M205.6 625.5v2.5M215.2 625.5v2.5M224.8 624v4M234.4 625.5v2.5M244.0 625.5v2.5M253.6 625.5v2.5M263.2 625.5v2.5M272.8 625.5v2.5M282.4 624v4M292.0 625.5v2.5M301.6 625.5v2.5M311.2 625.5v2.5M320.8 625.5v2.5M330.4 625.5v2.5M340.0 624v4M349.6 625.5v2.5M359.2 625.5v2.5M368.8 625.5v2.5M378.4 625.5v2.5M388.0 625.5v2.5M397.6 624v4M407.2 625.5v2.5M416.8 625.5v2.5M426.4 625.5v2.5M436.0 625.5v2.5M445.6 625.5v2.5M455.2 624v4M464.8 625.5v2.5M474.4 625.5v2.5M484.0 625.5v2.5M493.6 625.5v2.5M503.2 625.5v2.5M512.8 624v4M522.4 625.5v2.5M532.0 625.5v2.5M541.6 625.5v2.5M551.2 625.5v2.5M560.8 625.5v2.5M570.4 624v4M580.0 625.5v2.5M589.6 625.5v2.5M599.2 625.5v2.5M608.8 625.5v2.5M618.4 625.5v2.5M628.0 624v4M637.6 625.5v2.5M647.2 625.5v2.5M656.8 625.5v2.5M666.4 625.5v2.5M676.0 625.5v2.5M685.6 624v4M695.2 625.5v2.5M704.8 625.5v2.5M714.4 625.5v2.5M724.0 625.5v2.5M733.6 625.5v2.5M743.2 624v4M752.8 625.5v2.5M762.4 625.5v2.5M772.0 625.5v2.5M781.6 625.5v2.5M791.2 625.5v2.5M800.8 624v4M810.4 625.5v2.5M820.0 625.5v2.5M829.6 625.5v2.5M839.2 625.5v2.5M848.8 625.5v2.5M858.4 624v4M868.0 625.5v2.5M877.6 625.5v2.5M887.2 625.5v2.5M896.8 625.5v2.5M906.4 625.5v2.5M916.0 624v4M925.6 625.5v2.5M935.2 625.5v2.5M944.8 625.5v2.5M954.4 625.5v2.5M964.0 625.5v2.5M973.6 624v4M983.2 625.5v2.5M992.8 625.5v2.5M1002.4 625.5v2.5M1012.0 625.5v2.5M1021.6 625.5v2.5M1031.2 624v4M1040.8 625.5v2.5M1050.4 625.5v2.5M1060.0 625.5v2.5M1069.6 625.5v2.5M1079.2 625.5v2.5M1088.8 624v4M1098.4 625.5v2.5M1108.0 625.5v2.5M1117.6 625.5v2.5M1127.2 625.5v2.5M1136.8 625.5v2.5M1146.4 624v4M1156.0 625.5v2.5M1165.6 625.5v2.5M1175.2 625.5v2.5M1184.8 625.5v2.5M1194.4 625.5v2.5M1204.0 624v4M1213.6 625.5v2.5M1223.2 625.5v2.5" stroke="#5e4a2a" stroke-width="1" fill="none"/>
   <g font-size="12.500" fill="#f0e6cc" stroke="#f0e6cc" stroke-width=".35" text-anchor="middle">
<text x="109.5" y="622.500">6</text>
<text x="167.1" y="622.500">12</text>
<text x="224.7" y="622.500">18</text>
<text x="282.3" y="622.500">24</text>
<text x="339.9" y="622.500">30</text>
<text x="397.5" y="622.500">36</text>
<text x="455.1" y="622.500">42</text>
<text x="512.7" y="622.500">48</text>
<text x="570.3" y="622.500">54</text>
<text x="627.9" y="622.500">60</text>
<text x="685.5" y="622.500">66</text>
<text x="743.1" y="622.500">72</text>
<text x="800.7" y="622.500">78</text>
<text x="858.3" y="622.500">84</text>
<text x="915.9" y="622.500">90</text>
<text x="973.5" y="622.500">96</text>
<text x="1031.1" y="622.500">102</text>
<text x="1088.7" y="622.500">108</text>
<text x="1146.3" y="622.500">114</text>
<text x="1203.9" y="622.500">120</text>
   </g>
   <path d="M60 613.500l19.500 7-19.500 7z" fill="#2fa52c"/>
   <path d="M52 621v189" stroke="#b08b48" stroke-width="1.600"/>
   <ellipse cx="52" cy="617" rx="3.200" ry="4.200" fill="none" stroke="#c29a50" stroke-width="1.400"/><path d="M48.500 623h7" stroke="#c29a50" stroke-width="1.400"/>
   <ellipse cx="52" cy="656" rx="3" ry="4.600" fill="#535355" stroke="#b08b48" stroke-width="1.300"/>
   <g font-size="12.500" fill="#9c9c9e" text-anchor="middle">
<text x="282.7" y="660">1</text>
<text x="513.1" y="660">2</text>
<text x="743.5" y="660">3</text>
<text x="973.9" y="660">4</text>
<text x="1204.3" y="660">5</text>
   </g>
   <path d="M282.9 663v147M513.3 663v147M743.7 663v147M974.1 663v147M1204.5 663v147" stroke="#a2a2a4" stroke-width="1.800" fill="none"/>
   <g stroke="#d2a850" stroke-width="1.400" fill="none"><path d="M5.500 628.500l9-9"/><path d="M9.500 619h5.500v5.500M5 624v5.500h5.500"/></g>
   <g stroke="#c9a050" stroke-width="1.500" fill="none"><ellipse cx="569" cy="595" rx="6.500" ry="7.500" transform="rotate(25 569 595)"/><ellipse cx="569.500" cy="594.500" rx="4" ry="5" transform="rotate(25 569 595)" stroke="#8a6e3a"/></g>
   <path d="M850.500 590h9v8l-4.500 5-4.500-5z" stroke="#c9a050" stroke-width="1.500" fill="none"/>
   <g stroke="#d8a440" stroke-width="2.100" fill="none" stroke-linejoin="round"><path d="M1188.500 600.200l6.500-8.700 6.500 8.700zM1192 596.800h6" stroke-width="1.900"/><path d="M1214.500 600.500l4.500-5.800h14.500l4.500 5.800zM1219.300 590.500v4M1233.200 590.500v4"/></g>
  </svg>
</div>
</div>
</body>
</html>
